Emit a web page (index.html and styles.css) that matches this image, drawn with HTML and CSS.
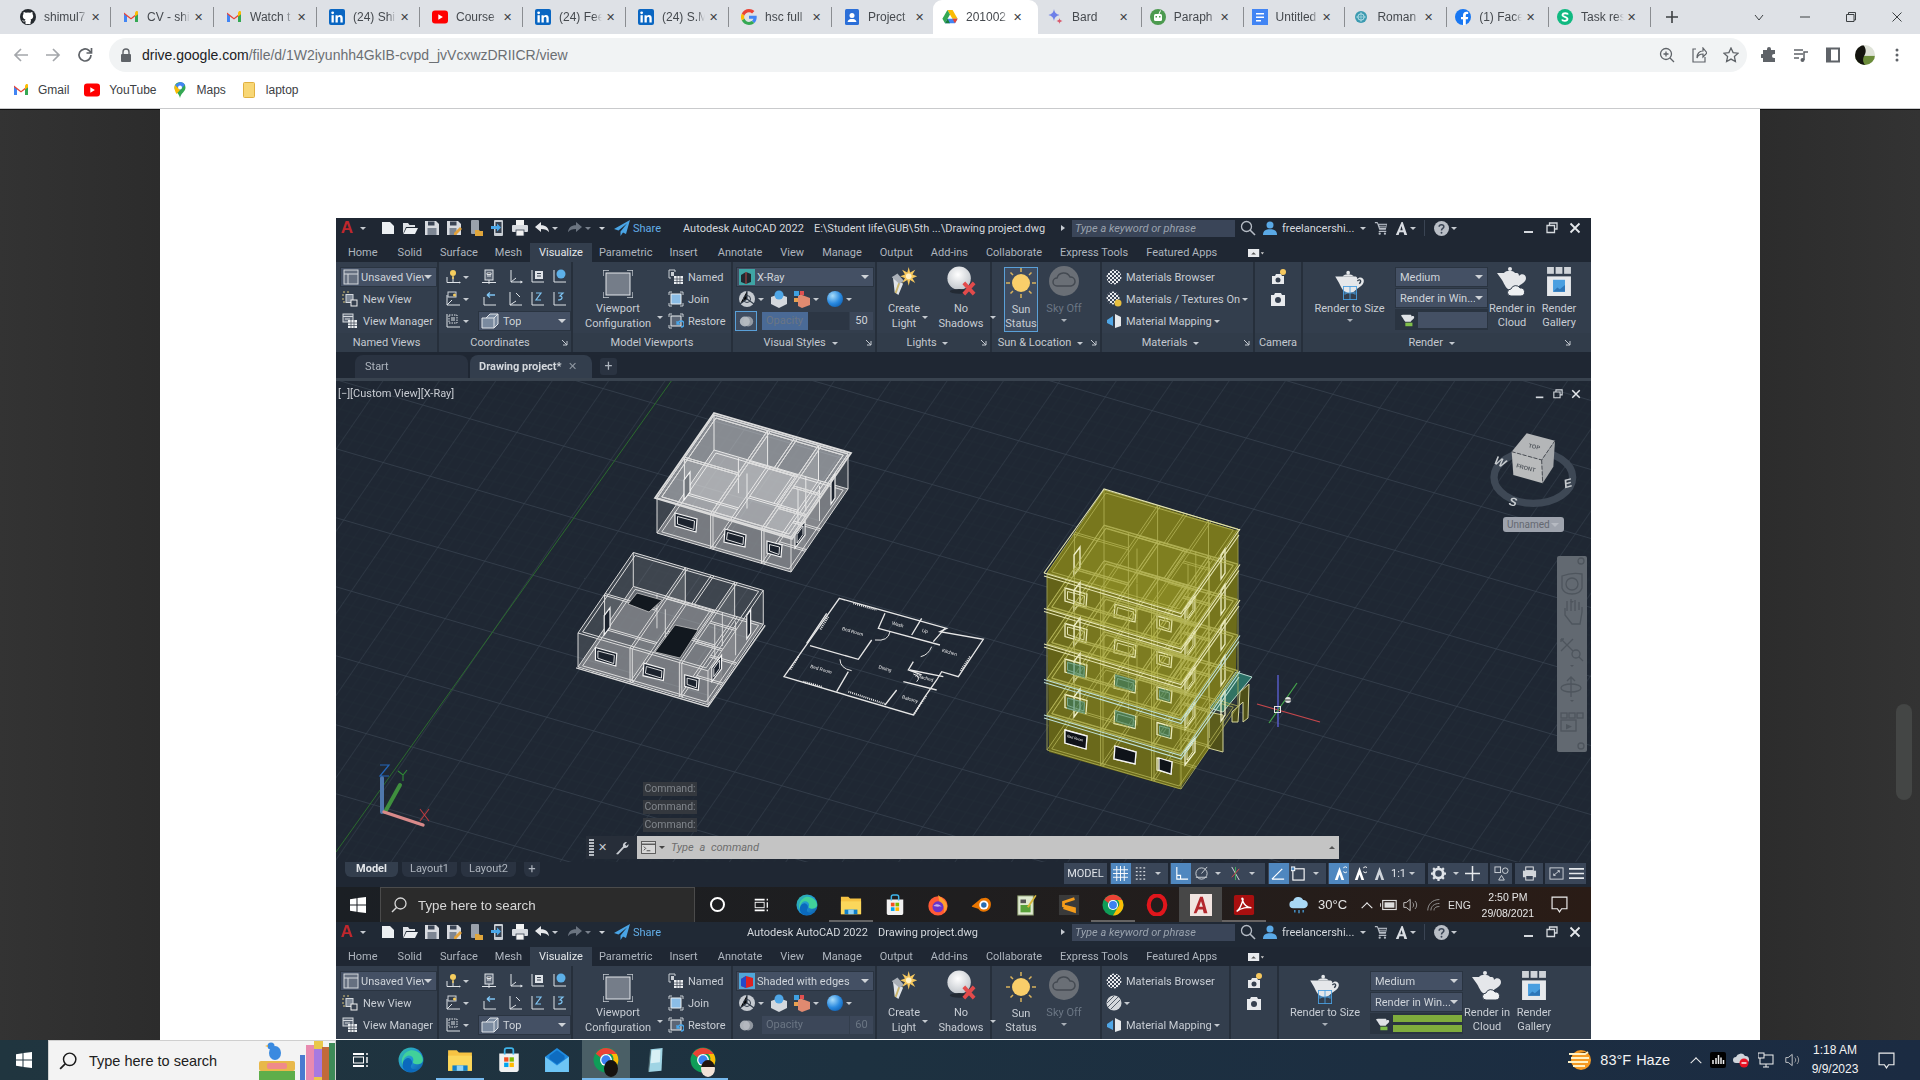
FILE: index.html
```html
<!DOCTYPE html>
<html lang="en">
<head>
<meta charset="utf-8">
<title>201002 - Google Drive</title>
<link rel="stylesheet" href="styles.css">
</head>
<body>
<svg class="defs" width="0" height="0" aria-hidden="true">
<defs>
<symbol id="f-gh" viewBox="0 0 16 16"><circle cx="8" cy="8" r="8" fill="#24292e"/><path d="M5 15v-2.500c-2 .4-2.600-1-2.800-1.500.8.300 1.500 1 2.800.6 0-.6.300-1 .5-1.200C3.500 10 2.800 8.800 2.800 7c0-.8.300-1.500.7-2-.1-.5-.1-1.200.2-2 .8 0 1.500.4 2 .8a7 7 0 0 1 4.600 0c.5-.4 1.200-.8 2-.8.300.8.300 1.500.2 2 .4.500.7 1.200.7 2 0 1.800-.7 3-2.700 3.400.3.300.5.800.5 1.500V15z" fill="#fff"/><path d="M5.500 15.500v-3l-2-1M10.500 15.500v-3" stroke="#24292e" fill="none" stroke-width=".5"/></symbol>
<symbol id="f-gm" viewBox="0 0 16 16"><path d="M1 3.500 8 9l7-5.500V13h-3V7.500L8 10.600 4 7.500V13H1z" fill="#ea4335"/><path d="M1 13h3V7.500L1 5z" fill="#4285f4"/><path d="M15 13h-3V7.500L15 5z" fill="#34a853"/><path d="M12 3.500v4l3-2.300V3c0-1-1.500-1.300-2-.8z" fill="#fbbc04"/></symbol>
<symbol id="f-li" viewBox="0 0 16 16"><rect width="16" height="16" rx="2" fill="#0a66c2"/><rect x="2.500" y="6.200" width="2.300" height="7.300" fill="#fff"/><circle cx="3.650" cy="3.800" r="1.400" fill="#fff"/><path d="M6.500 6.200h2.200v1c.5-.8 1.300-1.200 2.300-1.200 1.800 0 2.700 1.100 2.700 3.100v4.400h-2.300V9.500c0-1-.4-1.500-1.200-1.500s-1.400.6-1.400 1.600v3.900H6.500z" fill="#fff"/></symbol>
<symbol id="f-yt" viewBox="0 0 16 16"><rect y="1.500" width="16" height="13" rx="3" fill="#f00"/><path d="m6.300 5.200 4.600 2.800-4.600 2.800z" fill="#fff"/></symbol>
<symbol id="f-g" viewBox="0 0 16 16"><path d="M15.700 8.200c0-.6 0-1-.1-1.500H8v3h4.400c-.2 1-.8 1.800-1.600 2.400l2.500 2c1.500-1.400 2.400-3.400 2.400-5.900z" fill="#4285f4"/><path d="M8 16c2.200 0 4-.7 5.300-1.900l-2.500-2c-.7.500-1.600.8-2.800.8-2.100 0-3.900-1.400-4.600-3.400L.8 11.600C2.100 14.200 4.800 16 8 16z" fill="#34a853"/><path d="M3.400 9.500a4.900 4.900 0 0 1 0-3L.8 4.500a8 8 0 0 0 0 7.100z" fill="#fbbc05"/><path d="M8 3.200c1.200 0 2.300.4 3.100 1.200l2.300-2.300C12 .8 10.200 0 8 0 4.800 0 2.100 1.800.8 4.500l2.600 2C4.100 4.600 5.900 3.200 8 3.200z" fill="#ea4335"/></symbol>
<symbol id="f-ct" viewBox="0 0 16 16"><rect x="1" width="14" height="16" rx="1.500" fill="#2b6fd8"/><circle cx="8" cy="6.500" r="2.500" fill="#fff"/><path d="M3.500 13c.5-2.500 2.500-3 4.500-3s4 .5 4.500 3z" fill="#fff"/></symbol>
<symbol id="f-dr" viewBox="0 0 16 16"><path d="M5.400 1h5.200l5 8.700h-5.200z" fill="#fbbc04"/><path d="M5.400 1 .4 9.700 3 14.300l5-8.700z" fill="#34a853"/><path d="M3 14.300h10l2.600-4.600H5.600z" fill="#4285f4"/><path d="M3 14.300h5l-2.400-4.600z" fill="#188038"/><path d="M13 14.300 15.600 9.700h-5.200z" fill="#ea4335"/></symbol>
<symbol id="f-bd" viewBox="0 0 16 16"><path d="M6 0c.6 3.500 2 5 5.500 6C8 7 6.600 8.500 6 12 5.400 8.500 4 7 .5 6 4 5 5.400 3.500 6 0z" fill="#6d7fe8"/><path d="M11.500 9c.3 1.800 1 2.500 3 3-2 .5-2.700 1.200-3 3-.3-1.800-1-2.500-3-3 2-.5 2.700-1.200 3-3z" fill="#d9596c"/></symbol>
<symbol id="f-pa" viewBox="0 0 16 16"><circle cx="8" cy="8" r="8" fill="#4c9a4f"/><rect x="4" y="5" width="8" height="7" rx="1.500" fill="#fff"/><rect x="5.500" y="7" width="1.500" height="1.500" fill="#4c9a4f"/><rect x="9" y="7" width="1.500" height="1.500" fill="#4c9a4f"/><path d="M9 5 10.500 1.500" stroke="#fff"/></symbol>
<symbol id="f-dc" viewBox="0 0 16 16"><rect width="16" height="18" y="-1" rx="1.500" fill="#4285f4"/><path d="M4 4h8v1.500H4zm0 3.500h8V9H4zm0 3.500h5v1.500H4z" fill="#fff"/></symbol>
<symbol id="f-ro" viewBox="0 0 16 16"><circle cx="8" cy="8" r="6" fill="#3b9ab0"/><circle cx="8" cy="8" r="3.200" fill="none" stroke="#bfe4ec"/><path d="M3 8h10M8 3v10" stroke="#bfe4ec" stroke-width=".6"/></symbol>
<symbol id="f-fb" viewBox="0 0 16 16"><circle cx="8" cy="8" r="8" fill="#1877f2"/><path d="M10.800 16V10.300h2l.4-2.400h-2.400V6.400c0-.7.300-1.300 1.300-1.300h1.100V3c-.7-.1-1.300-.2-1.900-.2-2 0-3.300 1.200-3.300 3.400v1.700H6v2.400h2V16z" fill="#fff"/></symbol>
<symbol id="f-ts" viewBox="0 0 16 16"><circle cx="8" cy="8" r="8" fill="#10b981"/><path d="M11 5.500C10.500 4 6 3.600 5.500 5.800 5 8.200 10.800 7.500 10.500 10.200 10.200 12.500 5.500 12 5 10.500" fill="none" stroke="#fff" stroke-width="1.800"/></symbol>
<symbol id="f-mp" viewBox="0 0 16 16"><path d="M8 0a5.500 5.500 0 0 1 5.500 5.500C13.500 9.500 9 11 8 16 7 11 2.500 9.500 2.500 5.500A5.500 5.500 0 0 1 8 0z" fill="#34a853"/><path d="M3 3 8 0a5.500 5.500 0 0 1 5 2.800L8 8z" fill="#4285f4"/><path d="M2.500 5.500C2.500 4.500 2.700 3.800 3 3l5 5-3.600 4C3.500 10 2.500 8 2.500 5.500z" fill="#fbbc04"/><circle cx="8" cy="5.500" r="2" fill="#fff"/></symbol>
<symbol id="f-fd" viewBox="0 0 12 16"><rect x=".5" y=".5" width="11" height="15" rx="1" fill="#f8d775" stroke="#e0b040"/></symbol>

<symbol id="t-new" viewBox="0 0 16 16"><path d="M2 2h8l4 4v8H2z" fill="#eceff2"/></symbol>
<symbol id="t-open" viewBox="0 0 16 16"><path d="M1 3h5l1.500 2H13v2H4l-3 7z" fill="#dfe2e6"/><path d="M4.500 8H16l-3 6H1.500z" fill="#eceff2"/></symbol>
<symbol id="t-save" viewBox="0 0 16 16"><path d="M1 1h11l3 3v11H1z" fill="#d8dbe0"/><rect x="4" y="1.500" width="6.500" height="4" fill="#3a4454"/><rect x="3.500" y="8" width="9" height="7" fill="#7d8693"/></symbol>
<symbol id="t-saveas" viewBox="0 0 16 16"><path d="M1 1h11l3 3v11H1z" fill="#d8dbe0"/><rect x="4" y="1.500" width="6.500" height="4" fill="#3a4454"/><rect x="3.500" y="8" width="7" height="7" fill="#7d8693"/><path d="m8 13 6-6 2 2-6 6H8z" fill="#e2a13a"/></symbol>
<symbol id="t-ph1" viewBox="0 0 16 16"><rect x="3" y="0" width="8" height="14" rx="1" fill="#9aa1ab"/><path d="M7 10h4l1 1h3v5H7z" fill="#e0a63c"/></symbol>
<symbol id="t-ph2" viewBox="0 0 16 16"><rect x="4" y="0" width="9" height="16" rx="1" fill="#c9ced4"/><rect x="5.500" y="2" width="6" height="11" fill="#36404f"/><path d="M1 6h6V3.500L11 7.500 7 11.500V9H1z" fill="#49a6e8"/></symbol>
<symbol id="t-print" viewBox="0 0 16 16"><rect x="4" y="0" width="8" height="5" fill="#f2f2f2"/><rect x="0" y="5" width="16" height="7" rx="1" fill="#d8dbe0"/><rect x="4" y="10" width="8" height="6" fill="#f2f2f2" stroke="#36404f" stroke-width=".8"/></symbol>
<symbol id="t-undo" viewBox="0 0 16 16"><path d="M1 7 7 2v3.200c5 0 7.500 2.300 8 7-1.800-2.500-4-3.200-8-3.200V12z" fill="currentColor"/></symbol>
<symbol id="t-plane" viewBox="0 0 16 16"><path d="M16 0 0 9l4.500 1.500L13 3.500 6.500 11.500V16l2.500-3.500 3 1.500z" fill="#4aa5e6"/></symbol>
<symbol id="t-mag" viewBox="0 0 16 16"><circle cx="6.500" cy="6.500" r="5" fill="none" stroke="currentColor" stroke-width="1.300"/><path d="m10 10 5 5" stroke="currentColor" stroke-width="1.600"/></symbol>
<symbol id="t-user" viewBox="0 0 16 16"><circle cx="8" cy="4.500" r="4" fill="#5aa9e6"/><path d="M0 16c0-5 3-6.500 8-6.500S16 11 16 16z" fill="#5aa9e6"/></symbol>
<symbol id="t-cart" viewBox="0 0 16 16"><path d="M1 1h3l1 2h10l-1.500 7H6L3.500 2.500H1zM6 11h8v1.500H5z" fill="#b6bcc5"/><circle cx="6.500" cy="14.500" r="1.300" fill="#b6bcc5"/><circle cx="12.500" cy="14.500" r="1.300" fill="#b6bcc5"/><path d="M6 5h8M6.500 7h7" stroke="#1f2733"/></symbol>
<symbol id="t-a" viewBox="0 0 16 16"><path d="M8 0h1.500L15 16h-3.500l-1-3.500h-5L4.500 16H1zM6.500 10h3L8 5z" fill="#d8dce2"/></symbol>
<symbol id="t-help" viewBox="0 0 16 16"><circle cx="8" cy="8" r="8" fill="#b9bec6"/><path d="M5.500 6C5.500 3.500 10.500 3.500 10.500 6 10.500 8 8 7.800 8 10" fill="none" stroke="#3a4454" stroke-width="1.600"/><circle cx="8" cy="12.500" r="1" fill="#3a4454"/></symbol>
<symbol id="t-min" viewBox="0 0 12 12"><path d="M1 10h9" stroke="#d5d9de" stroke-width="2"/></symbol>
<symbol id="t-rest" viewBox="0 0 12 12"><path d="M3.500 3V1h7.500v6H8.500M1 3.500h7.500v7H1z" fill="none" stroke="#d5d9de" stroke-width="1.300"/></symbol>
<symbol id="t-x" viewBox="0 0 12 12"><path d="m1.500 1.500 9 9m0-9-9 9" stroke="#e5e8ec" stroke-width="1.800"/></symbol>

<symbol id="r-view" viewBox="0 0 16 16"><rect x="1" y="1" width="14" height="14" fill="#667080" stroke="#d5d9de"/><path d="M1 5h14M5 5v10" stroke="#d5d9de"/></symbol>
<symbol id="r-newv" viewBox="0 0 16 16"><path d="M1 1h2M5 1h2M1 3v2M1 7v2M1 11h2" stroke="#d9c47c"/><rect x="4" y="3.500" width="7" height="8" fill="#7e8896" stroke="#d5d9de"/><rect x="9" y="9" width="6" height="6" fill="#36404f" stroke="#f0f0f0"/></symbol>
<symbol id="r-mgr" viewBox="0 0 16 16"><rect x="1" y="1" width="10" height="8" fill="#5c6675" stroke="#d5d9de"/><path d="M1 3.500h10M3 6h5" stroke="#d5d9de"/><rect x="6" y="7" width="9" height="8" fill="#eceff2"/><path d="M6 10h9M6 12.500h9M9 7v8M12 7v8" stroke="#36404f" stroke-width=".7"/></symbol>
<symbol id="r-ax1" viewBox="0 0 16 16"><path d="M2 8v5.500h13M8 8v5.500" fill="none" stroke="#dfe3e8"/><circle cx="8" cy="4" r="3" fill="#f6cd5e"/><path d="M8 7v3" stroke="#f6cd5e" stroke-width="1.400"/><path d="m16 13.500-2-1v2z" fill="#dfe3e8"/></symbol>
<symbol id="r-ax2" viewBox="0 0 16 16"><rect x="4" y="1" width="8" height="10" fill="#5c6675" stroke="#dfe3e8"/><path d="M6 4h4v1.500H6zM6 7h4" stroke="#dfe3e8"/><path d="M1 13.500h14M8 11v4" stroke="#dfe3e8"/></symbol>
<symbol id="r-ax3" viewBox="0 0 16 16"><path d="M4 1v12l5-4" fill="none" stroke="#dfe3e8"/><path d="M4 13h11" stroke="#dfe3e8"/><path d="m16 13-2.500-1.500v3z" fill="#dfe3e8"/></symbol>
<symbol id="r-ax4" viewBox="0 0 16 16"><path d="M3 1v12h12" fill="none" stroke="#dfe3e8"/><rect x="6" y="2" width="8" height="8" fill="#dfe3e8"/><path d="M8 4.500h4M8 7h4" stroke="#36404f"/></symbol>
<symbol id="r-ax5" viewBox="0 0 16 16"><path d="M3 1v12h12" fill="none" stroke="#dfe3e8"/><circle cx="10" cy="5" r="4.500" fill="#5db0e8"/></symbol>
<symbol id="r-ax6" viewBox="0 0 16 16"><path d="M2 4v10h13M2 14l5-5" fill="none" stroke="#dfe3e8"/><rect x="3" y="1" width="8" height="5" fill="none" stroke="#cfd4da"/><circle cx="9.500" cy="4" r="1.500" fill="#f6cd5e"/></symbol>
<symbol id="r-ax7" viewBox="0 0 16 16"><path d="M3 6v8h12" fill="none" stroke="#dfe3e8"/><path d="M6 4H14M6 4l3-2.500M6 4l3 2.500" stroke="#7fc4f2" fill="none" stroke-width="1.300"/></symbol>
<symbol id="r-ax8" viewBox="0 0 16 16"><path d="M3 1v13h12M3 14l6-4" fill="none" stroke="#dfe3e8"/><path d="m9 2 4 4" stroke="#dfe3e8"/></symbol>
<symbol id="r-ax9" viewBox="0 0 16 16"><path d="M3 1v13h12" fill="none" stroke="#dfe3e8"/><path d="M7 2h5L7 9h5" fill="none" stroke="#7fc4f2" stroke-width="1.200"/></symbol>
<symbol id="r-ax10" viewBox="0 0 16 16"><path d="M3 1v13h12" fill="none" stroke="#dfe3e8"/><path d="M7 2h5l-3 3c3 0 3 4-2 4" fill="none" stroke="#7fc4f2" stroke-width="1.200"/></symbol>
<symbol id="r-ax11" viewBox="0 0 16 16"><path d="M2 14h13M2 14V1" fill="none" stroke="#dfe3e8"/><rect x="4" y="2" width="8" height="8" fill="none" stroke="#dfe3e8" stroke-dasharray="1.500 1"/><path d="M6 5h4M6 7h4" stroke="#dfe3e8"/></symbol>
<symbol id="r-top" viewBox="0 0 18 16"><path d="M5 5 9 1h8v10l-4 4H1V5zM5 5h8v10M13 5l4-4" fill="#7a8a9f" stroke="#dfe3e8"/></symbol>
<symbol id="r-vp" viewBox="0 0 30 28"><path d="M0 6V0h6M24 0h6v6M30 22v6h-6M6 28H0v-6" fill="none" stroke="#c9ced4" stroke-width="1.300"/><rect x="3" y="3" width="24" height="22" fill="#757d89" stroke="#e3e6ea"/></symbol>
<symbol id="r-named" viewBox="0 0 16 16"><path d="M1 3V1h6v2M1 3v6h2" fill="none" stroke="#c9ced4"/><rect x="3" y="3" width="3" height="4" fill="#c9ced4"/><rect x="6" y="7" width="9" height="8" fill="#eceff2"/><path d="M6 10h9M6 12.500h9M9 7v8M12 7v8" stroke="#36404f" stroke-width=".7"/></symbol>
<symbol id="r-join" viewBox="0 0 16 16"><path d="M1 4V1h3M12 1h3v3M15 12v3h-3M4 15H1v-3" fill="none" stroke="#c9ced4"/><rect x="3" y="3" width="10" height="10" fill="#8bbde6" stroke="#eceff2"/></symbol>
<symbol id="r-rest" viewBox="0 0 16 16"><path d="M1 4V1h3M12 1h3v3M4 15H1v-3" fill="none" stroke="#c9ced4"/><rect x="3" y="3" width="10" height="10" fill="#5c6675" stroke="#eceff2"/><path d="M10 11a3 3 0 1 1 3 3M9 8v3h3" fill="none" stroke="#49a6e8" stroke-width="1.300"/></symbol>
<symbol id="r-xray" viewBox="0 0 16 16"><rect width="16" height="16" fill="#3fa5a5"/><path d="M2 6 7 3l5 2v8l-5 2-5-2z" fill="#20282f"/><path d="M7 3v12" stroke="#b44"/></symbol>
<symbol id="r-shaded" viewBox="0 0 16 16"><rect width="16" height="16" fill="#4fa6d8"/><path d="M2 6 7 3l7 2v8l-7 2-5-2z" fill="#d22"/><path d="M7 3v12L2 13V6z" fill="#2348c9"/></symbol>
<symbol id="r-vs1" viewBox="0 0 18 18"><circle cx="9" cy="9" r="8" fill="#c5cad0"/><path d="M9 1v8l-7 5M9 9l7 5" stroke="#333e4c" stroke-width="1.200"/><circle cx="9" cy="9" r="3.500" fill="none" stroke="#333e4c"/></symbol>
<symbol id="r-vs2" viewBox="0 0 18 18"><path d="m9 4 8 3v7l-8 4-8-4V7z" fill="#d4d8dd"/><circle cx="9" cy="5" r="4.500" fill="#4fa6e6"/></symbol>
<symbol id="r-vs3" viewBox="0 0 18 18"><path d="m9 5 8 3v7l-8 3-4-2V5z" fill="#e08a70"/><rect x="1" y="1" width="5" height="5" fill="#3fa0e0"/><rect x="7" y="1" width="4" height="4" fill="#e05050"/><rect x="1" y="8" width="4" height="4" fill="#e8a050"/></symbol>
<symbol id="r-vs4" viewBox="0 0 18 18"><defs><radialGradient id="gBall" cx=".35" cy=".3" r=".8"><stop offset="0" stop-color="#a8dcfa"/><stop offset=".6" stop-color="#2a8ae0"/><stop offset="1" stop-color="#0f5fb0"/></radialGradient></defs><circle cx="9" cy="9" r="8" fill="url(#gBall)"/></symbol>
<symbol id="r-xr2" viewBox="0 0 18 18"><circle cx="7" cy="9" r="6" fill="#e0e2e5" fill-opacity=".7"/><circle cx="11" cy="9" r="6" fill="#b8bcc2" fill-opacity=".7"/></symbol>
<symbol id="r-light" viewBox="0 0 30 32"><path d="M3 11 14 19 9 31 5 28 4 18z" fill="#dfe3e8"/><path d="m6 29 4-11" stroke="#c9b56c" stroke-width="2"/><path d="M2 12 8 8 15 16 10 19z" fill="#aab0b8"/><path d="M20 1 21.500 7 27 4 24 9 29 11 24 13 27 18 21.500 15 20 21 18.500 15 13 18 16 13 11 11 16 9 13 4 18.500 7z" fill="#f6c85e"/><circle cx="20" cy="11" r="3" fill="#fff2c8"/></symbol>
<symbol id="r-shadow" viewBox="0 0 32 32"><defs><radialGradient id="gShad" cx=".45" cy=".35" r=".7"><stop offset="0" stop-color="#fff"/><stop offset="1" stop-color="#bdc2c8"/></radialGradient></defs><circle cx="14" cy="13" r="12.500" fill="url(#gShad)"/><ellipse cx="14" cy="27" rx="10" ry="2.500" fill="#232a34"/><path d="m19 18 11 12m0-12L19 30" stroke="#e34b4b" stroke-width="4"/></symbol>
<symbol id="r-sun" viewBox="0 0 30 30"><circle cx="15" cy="15" r="9" fill="#f9ce6a"/><path d="M15 0v4M15 26v4M0 15h4M26 15h4M4.500 4.500 7 7M23 23l2.500 2.500M25.500 4.500 23 7M7 23l-2.500 2.500" stroke="#d9b25c" stroke-width="1.500"/></symbol>
<symbol id="r-sky" viewBox="0 0 30 30"><circle cx="15" cy="15" r="15" fill="#6a6f76"/><path d="M8 20a4 4 0 0 1 0-8 7 7 0 0 1 13-1 4.500 4.500 0 0 1 1 9z" fill="none" stroke="#444a52" stroke-width="1.500"/></symbol>
<symbol id="r-chk" viewBox="0 0 16 16"><defs><pattern id="pChk" width="4" height="4" patternUnits="userSpaceOnUse"><rect width="4" height="4" fill="#e8eaed"/><rect width="2" height="2" fill="#3a4454"/><rect x="2" y="2" width="2" height="2" fill="#3a4454"/></pattern></defs><circle cx="8" cy="8" r="7.500" fill="url(#pChk)"/></symbol>
<symbol id="r-chk2" viewBox="0 0 16 16"><circle cx="7" cy="7" r="6.500" fill="url(#pChk)"/><circle cx="12" cy="12" r="3.500" fill="#e8c040"/></symbol>
<symbol id="r-chk3" viewBox="0 0 16 16"><circle cx="8" cy="8" r="7.500" fill="#d5d8dc"/><path d="M2 12 12 2M5 14 14 5M1 8l7-7" stroke="#555e6a"/></symbol>
<symbol id="r-map" viewBox="0 0 16 16"><path d="M9 1 15 4v9L9 15z" fill="#e6e9ec"/><path d="M7 3 1 7v3l6 3z" fill="#4fa6e6"/></symbol>
<symbol id="r-cam1" viewBox="0 0 18 18"><path d="M3 8h3l1-2h5l1 2h2v8H3z" fill="#e8eaed"/><circle cx="9" cy="12" r="2.500" fill="#36404f"/><circle cx="14" cy="4" r="3" fill="#f6c85e"/></symbol>
<symbol id="r-cam2" viewBox="0 0 18 18"><path d="M2 5h3l1-2h6l1 2h3v11H2z" fill="#e8eaed"/><circle cx="9" cy="10" r="3" fill="#36404f"/></symbol>
<symbol id="r-pot" viewBox="0 0 32 26"><path d="M6 8h16c1 0 2 1 2 3 2-3 7-2 7 2 0 5-6 7-9 10-2 2-4 3-7 3-6 0-8-5-11-11L0 8z" fill="#e5e7ea"/><circle cx="14" cy="4" r="2" fill="#e5e7ea"/><path d="M8 8c2-3 10-3 12 0z" fill="#e5e7ea"/><path d="M24 13c3-3 5 0 2 3" stroke="#333e4c" fill="none" stroke-width="1.500"/></symbol>
<symbol id="r-potc" viewBox="0 0 30 30"><path d="M5 7h15c1 0 2 1 2 3 2-3 7-2 7 2 0 5-6 6-8 9-2 2-4 3-6 3-6 0-7-5-10-10L0 7z" fill="#e5e7ea"/><circle cx="13" cy="3" r="2" fill="#e5e7ea"/><path d="M7 7c2-3 9-3 11 0z" fill="#e5e7ea"/><path d="M14 30a3.500 3.500 0 0 1 0-7 5 5 0 0 1 9-1 4 4 0 0 1 1 8z" fill="#eef0f2" stroke="#333e4d"/></symbol>
<symbol id="r-size" viewBox="0 0 16 16"><rect x=".5" y=".5" width="15" height="15" fill="none" stroke="#4a9fe0"/><path d="M8 0v16M0 8h16M4 8l-2-2m2 2-2 2M12 8l2-2m-2 2 2 2" stroke="#4a9fe0"/></symbol>
<symbol id="r-gal" viewBox="0 0 28 34"><rect width="8" height="8" fill="#cfd3d8"/><rect x="10" width="8" height="8" fill="#cfd3d8"/><rect x="20" width="8" height="8" fill="#cfd3d8"/><rect y="11" width="28" height="23" fill="#e7e9ec"/><rect x="7" y="15" width="14" height="14" fill="#4a9fe0"/><path d="m7 29 5-5 3 2 6-5v8z" fill="#2e76b8"/></symbol>
<symbol id="r-prog" viewBox="0 0 18 16"><path d="M3 2h9c1 0 1 2 1 2 2-1 3 0 3 1 0 2-3 3-4 5H6C4 8 3 5 1 3z" fill="#dfe2e6"/><rect x="6" y="11" width="8" height="4" fill="#7fbf4a"/></symbol>
<symbol id="r-launch" viewBox="0 0 8 8"><path d="M1 1l5 5M6 2v4H2" stroke="#c4c9d0" fill="none"/></symbol>

<symbol id="s-grid" viewBox="0 0 16 16"><path d="M4 0v16M8 0v16M12 0v16M0 4h16M0 8h16M0 12h16" stroke="#fff"/></symbol>
<symbol id="s-snap" viewBox="0 0 16 16"><path d="M3 2h2M7 2h2M11 2h2M3 6h2M7 6h2M11 6h2M3 10h2M7 10h2M11 10h2M3 14h2M7 14h2M11 14h2" stroke="#d4d8dd" stroke-width="1.500"/></symbol>
<symbol id="s-ortho" viewBox="0 0 16 16"><path d="M3 1v13h12M3 10h4v4" stroke="#fff" fill="none" stroke-width="1.200"/></symbol>
<symbol id="s-polar" viewBox="0 0 16 16"><circle cx="8" cy="8" r="6" fill="none" stroke="#cfd4da"/><path d="M8 8 14 1M2 12h12" stroke="#cfd4da"/></symbol>
<symbol id="s-iso" viewBox="0 0 16 16"><path d="M4 1 12 15" stroke="#d5d9de"/><path d="M8 1 8 15" stroke="#3fae5e"/><path d="M12 3 4 12" stroke="#d94a4a"/></symbol>
<symbol id="s-osnap" viewBox="0 0 16 16"><path d="M1 14 12 3M1 14h13" stroke="#fff" stroke-width="1.300" fill="none"/></symbol>
<symbol id="s-trans" viewBox="0 0 16 16"><rect x="2" y="3" width="12" height="12" fill="none" stroke="#fff" stroke-width="1.200"/><rect x="0" y="1" width="4" height="4" fill="#4f87bf" stroke="#fff"/></symbol>
<symbol id="s-anno" viewBox="0 0 16 16"><path d="M8 1 13 15H10L8 9 6 15H3z" fill="#fff"/><path d="M12 6a3 3 0 1 0 0-4" stroke="#fff" fill="none"/></symbol>
<symbol id="s-anno2" viewBox="0 0 16 16"><path d="M8 1 13 15H10L8 9 6 15H3z" fill="#cfd4da"/></symbol>
<symbol id="s-gear" viewBox="0 0 16 16"><circle cx="8" cy="8" r="5" fill="none" stroke="#dfe3e8" stroke-width="3"/><path d="M8 0v3M8 13v3M0 8h3M13 8h3M2.300 2.300l2 2M11.700 11.700l2 2M13.700 2.300l-2 2M4.300 11.700l-2 2" stroke="#dfe3e8" stroke-width="2.400"/></symbol>
<symbol id="s-plus" viewBox="0 0 16 16"><path d="M8 0v16M0 8h16" stroke="#e6e9ec" stroke-width="1.600"/></symbol>
<symbol id="s-shapes" viewBox="0 0 16 16"><rect x="1" y="1" width="6" height="6" fill="none" stroke="#cfd4da"/><circle cx="12" cy="5" r="3" fill="none" stroke="#cfd4da"/><path d="M5 15l3-5 3 5z" fill="none" stroke="#cfd4da"/></symbol>
<symbol id="s-print" viewBox="0 0 16 16"><rect x="4" y="1" width="8" height="4" fill="none" stroke="#e6e9ec"/><rect x="1" y="5" width="14" height="7" fill="#d2d6db"/><rect x="4" y="10" width="8" height="5" fill="#3a4658" stroke="#e6e9ec"/></symbol>
<symbol id="s-full" viewBox="0 0 16 16"><rect x="1" y="2" width="14" height="12" fill="none" stroke="#cfd4da"/><path d="m5 10 6-5M9 5h2v2M5 8v2h2" stroke="#cfd4da" fill="none"/></symbol>
<symbol id="s-menu" viewBox="0 0 16 16"><path d="M0 3h16M0 8h16M0 13h16" stroke="#e6e9ec" stroke-width="1.800"/></symbol>
<symbol id="c-term" viewBox="0 0 16 14"><rect x=".5" y=".5" width="15" height="13" fill="#d8d8d8" stroke="#555"/><path d="M.5 3.500h15" stroke="#555" stroke-width="1.500"/><path d="m3 6 2 2-2 2M6 10.500h4" stroke="#444" fill="none"/></symbol>
<symbol id="c-wrench" viewBox="0 0 14 14"><path d="M1 13 8 5.500C7.500 3 9 1 12 1L10 3.500 11.500 5 13.500 3c.5 3-2 4.500-4.500 4L3 13.500z" fill="#c8ccd2"/></symbol>

<symbol id="w-logo" viewBox="0 0 16 16"><path d="M0 2.200 6.500 1.300V7.500H0zM7.500 1.100 16 0V7.500H7.500zM0 8.500H6.500V14.700L0 13.800zM7.500 8.500H16V16L7.500 14.900z" fill="#fff"/></symbol>
<symbol id="w-search" viewBox="0 0 16 16"><circle cx="9.500" cy="6.500" r="5.500" fill="none" stroke="currentColor" stroke-width="1.300"/><path d="M5.500 10.500 1 15" stroke="currentColor" stroke-width="1.500"/></symbol>
<symbol id="w-task" viewBox="0 0 20 20"><path d="M3 3h11v2H3zM3 15h11v2H3z" fill="#fff"/><rect x="3.500" y="7" width="10" height="6" fill="none" stroke="#fff"/><path d="M17 3v2M17 7v6M17 15v2" stroke="#fff" stroke-width="1.400"/></symbol>
<symbol id="w-edge" viewBox="0 0 24 24"><defs><linearGradient id="gEdge" x1="0" y1="0" x2="1" y2="1"><stop offset="0" stop-color="#35c1a0"/><stop offset=".5" stop-color="#1f93d8"/><stop offset="1" stop-color="#0c59a4"/></linearGradient></defs><circle cx="12" cy="12" r="11.500" fill="url(#gEdge)"/><path d="M6 20c-6-8 0-17 7-17 5 0 10 4 10 9 0 3-3 4-5 4-3 0-5-1-4-3 1-3-2-6-5-5-4 1-6 7-3 12z" fill="#41d19a"/><path d="M7 11c4-3 8 3 5 6-1 3 2 4 6 3-4 4-9 4-12 1-3-3-2-8 1-10z" fill="#0b69bd"/></symbol>
<symbol id="w-folder" viewBox="0 0 24 24"><path d="M1 3h8l2 2h12v17H1z" fill="#f6c343"/><path d="M1 8h22v14H1z" fill="#fbd75b"/><rect x="5" y="17" width="14" height="5" fill="#0f7fc9"/><rect x="9" y="17" width="6" height="5" fill="#8fd2f5"/></symbol>
<symbol id="w-store" viewBox="0 0 24 24"><path d="M3 6h18v15c0 1-1 2-2 2H5c-1 0-2-1-2-2z" fill="#f1f1f1"/><path d="M8 7V3c0-1 1-2 2-2h4c1 0 2 1 2 2v4" stroke="#3fb4ea" fill="none" stroke-width="1.600"/><rect x="7.500" y="9.500" width="4" height="4" fill="#f25022"/><rect x="12.500" y="9.500" width="4" height="4" fill="#7fba00"/><rect x="7.500" y="14.500" width="4" height="4" fill="#00a4ef"/><rect x="12.500" y="14.500" width="4" height="4" fill="#ffb900"/></symbol>
<symbol id="w-mail" viewBox="0 0 24 24"><path d="M12 1 23 9v14H1V9z" fill="#1f8be0"/><path d="M1 9 12 17 23 9v14H1z" fill="#6ec5f5"/><path d="M5 11V8l7-5 7 5v3l-7 5z" fill="#0e6cc0"/></symbol>
<symbol id="w-chrome" viewBox="0 0 24 24"><circle cx="12" cy="12" r="11.500" fill="#0f9d58"/><path d="M2.500 6.200A11.500 11.500 0 0 1 22 6.500H12a5.500 5.500 0 0 0-5 3.200z" fill="#ea4335"/><path d="M22 6.500A11.500 11.500 0 0 1 12 23.500L17 15a5.500 5.500 0 0 0-.2-8.500z" fill="#fbbc05"/><circle cx="12" cy="12" r="5.500" fill="#fff"/><circle cx="12" cy="12" r="4.300" fill="#3b82f0"/></symbol>
<symbol id="w-note" viewBox="0 0 24 24"><path d="M8 2 19 1 18 22 6 23z" fill="#9fd4e4"/><path d="M9 3 17 2.500 16.500 14 8 15z" fill="#d8f0f5"/><path d="M6 23 8 2" stroke="#506a70"/></symbol>
<symbol id="w-fire" viewBox="0 0 24 24"><circle cx="12" cy="13" r="10.500" fill="#ff5a36"/><path d="M12 1c3 3 9 5 10 12 0 3-2 6-4 8 2-5 0-9-4-10z" fill="#ff9f2e"/><circle cx="12" cy="14" r="6" fill="#6a34c9"/><path d="M7 13c3-3 7-2 9 1-1-1-3-1-4 0z" fill="#fff" fill-opacity=".6"/></symbol>
<symbol id="w-blend" viewBox="0 0 24 24"><path d="M1 13 11 5l5-1c5 1 7 6 5 11-3 5-10 6-13 1L1 14z" fill="#ea7600"/><circle cx="14" cy="12" r="5" fill="#fff"/><circle cx="14" cy="12" r="3" fill="#2a6db0"/></symbol>
<symbol id="w-notes" viewBox="0 0 24 24"><rect x="3" y="2" width="17" height="21" fill="#dfead0" stroke="#7a8a60"/><rect x="6" y="12" width="11" height="8" fill="#58a23a"/><path d="M6 6h6v4H6z" fill="#555"/><path d="m13 14 9-13 1.500 1L15 15z" fill="#d8b83a"/></symbol>
<symbol id="w-subl" viewBox="0 0 24 24"><rect x="1" y="1" width="22" height="22" fill="#3a3a3a"/><path d="M18 5 6 9v4l12 3v3L6 15" fill="none" stroke="#f59c1a" stroke-width="3"/></symbol>
<symbol id="w-opera" viewBox="0 0 24 24"><ellipse cx="12" cy="12" rx="9" ry="10.500" fill="none" stroke="#e0161c" stroke-width="4.500"/></symbol>
<symbol id="w-acad" viewBox="0 0 24 24"><rect width="24" height="24" fill="#f1e4e0"/><path d="M11 3h3l5 18h-4l-1-4H9l-2 4H4zm-1 11h4l-2-6z" fill="#b3272d"/></symbol>
<symbol id="w-adobe" viewBox="0 0 24 24"><rect x="1" y="1" width="22" height="22" rx="2" fill="#a80f0f"/><path d="M4 19c3-2 5-6 7-13 0-2-2-2-1 0 2 6 5 9 10 9-4-1-11 0-16 4z" fill="none" stroke="#fff" stroke-width="1.500"/></symbol>
<symbol id="w-cloud" viewBox="0 0 24 24"><path d="M5 16a4.500 4.500 0 0 1 0-9 6.500 6.500 0 0 1 12-1 5 5 0 0 1 1 10z" fill="#a9d8f5"/><path d="M7 18v3M12 18v4M17 18v3" stroke="#4ba6e6" stroke-width="1.500"/></symbol>
<symbol id="w-batt" viewBox="0 0 20 14"><rect x="3" y="2" width="15" height="10" fill="none" stroke="#ddd" stroke-width="1.300"/><rect x="5" y="4" width="11" height="6" fill="#ddd"/><path d="M0 5v4" stroke="#ddd" stroke-width="2"/></symbol>
<symbol id="w-vol" viewBox="0 0 20 16"><path d="M1 5h3l5-4v14l-5-4H1z" fill="none" stroke="#e3e3e3"/><path d="M12 5a4 4 0 0 1 0 6M15 3a7 7 0 0 1 0 10" fill="none" stroke="#b5b5b5"/></symbol>
<symbol id="w-wifi" viewBox="0 0 18 16"><path d="M1 15c0-8 6-14 15-14M5 15c0-5 4-9 11-9M9 15c0-3 2-5 7-5" fill="none" stroke="#9a9a9a" stroke-width="1.200"/></symbol>
<symbol id="w-note2" viewBox="0 0 16 16"><path d="M1 1h14v11H10l-2 3-2-3H1z" fill="none" stroke="#eee" stroke-width="1.100"/></symbol>
<symbol id="w-haze" viewBox="0 0 24 24"><circle cx="13" cy="12" r="10" fill="#f59a23"/><path d="M1 6h16l3-2M3 10h18M0 14h20M5 18h12" stroke="#fff2c5" stroke-width="1.800"/></symbol>
<symbol id="w-bars" viewBox="0 0 16 16"><rect width="16" height="16" rx="2" fill="#000"/><path d="M3 12V8M6 12V6M8.500 12V3M11 12V5.500M13.500 12V8" stroke="#eee" stroke-width="1.500"/></symbol>
<symbol id="w-off" viewBox="0 0 16 16"><path d="M3 11a3 3 0 0 1 0-6 5 5 0 0 1 9-1 3.500 3.500 0 0 1 1 7z" fill="#cfd4da"/><circle cx="11" cy="11" r="4.500" fill="#e81123"/><path d="M8.500 11h5" stroke="#fff" stroke-width="1.400"/></symbol>
<symbol id="w-net" viewBox="0 0 16 16"><rect x="2" y="3" width="13" height="9" fill="none" stroke="#f2f2f2"/><rect x="0" y="1" width="6" height="5" fill="#1b2b42" stroke="#f2f2f2"/><path d="M8 12v3M5 15h6" stroke="#f2f2f2"/></symbol>
</defs>
</svg>

<header class="chrome">
  <div class="tabstrip">
    <div class="tab"><svg class="fav"><use href="#f-gh"/></svg><span class="tab-t">shimul7</span><span class="tab-x">✕</span></div>
    <div class="tab"><svg class="fav"><use href="#f-gm"/></svg><span class="tab-t">CV - shi</span><span class="tab-x">✕</span></div>
    <div class="tab"><svg class="fav"><use href="#f-gm"/></svg><span class="tab-t">Watch t</span><span class="tab-x">✕</span></div>
    <div class="tab"><svg class="fav"><use href="#f-li"/></svg><span class="tab-t">(24) Shi</span><span class="tab-x">✕</span></div>
    <div class="tab"><svg class="fav"><use href="#f-yt"/></svg><span class="tab-t">Course</span><span class="tab-x">✕</span></div>
    <div class="tab"><svg class="fav"><use href="#f-li"/></svg><span class="tab-t">(24) Fee</span><span class="tab-x">✕</span></div>
    <div class="tab"><svg class="fav"><use href="#f-li"/></svg><span class="tab-t">(24) S.M</span><span class="tab-x">✕</span></div>
    <div class="tab"><svg class="fav"><use href="#f-g"/></svg><span class="tab-t">hsc full</span><span class="tab-x">✕</span></div>
    <div class="tab tab-plain"><svg class="fav"><use href="#f-ct"/></svg><span class="tab-t">Project</span><span class="tab-x">✕</span></div>
    <div class="tab-active"><svg class="fav"><use href="#f-dr"/></svg><span class="tab-t">201002</span><span class="tab-x">✕</span></div>
    <div class="tab tab-r"><svg class="fav"><use href="#f-bd"/></svg><span class="tab-t">Bard</span><span class="tab-x">✕</span></div>
    <div class="tab tab-r"><svg class="fav"><use href="#f-pa"/></svg><span class="tab-t">Paraph</span><span class="tab-x">✕</span></div>
    <div class="tab tab-r"><svg class="fav"><use href="#f-dc"/></svg><span class="tab-t">Untitled</span><span class="tab-x">✕</span></div>
    <div class="tab tab-r"><svg class="fav"><use href="#f-ro"/></svg><span class="tab-t">Roman</span><span class="tab-x">✕</span></div>
    <div class="tab tab-r"><svg class="fav"><use href="#f-fb"/></svg><span class="tab-t">(1) Face</span><span class="tab-x">✕</span></div>
    <div class="tab tab-r"><svg class="fav"><use href="#f-ts"/></svg><span class="tab-t">Task res</span><span class="tab-x">✕</span></div>
    <svg class="newtab" viewBox="0 0 12 12"><path d="M6 0v12M0 6h12" stroke="#3c4043" stroke-width="1.600"/></svg>
    <div class="winbtns">
      <span class="winbtn"><svg viewBox="0 0 10 10" class="wb"><path d="m1 3 4 5 4-5" fill="none" stroke="#3c4043"/></svg></span>
      <span class="winbtn"><svg viewBox="0 0 10 10" class="wb"><path d="M0 5h10" stroke="#3c4043"/></svg></span>
      <span class="winbtn"><svg viewBox="0 0 10 10" class="wb"><path d="M2.500 2V.5h7V8H8M.5 2.500H8v7H.5z" fill="none" stroke="#3c4043"/></svg></span>
      <span class="winbtn"><svg viewBox="0 0 10 10" class="wb"><path d="m.5.5 9 9m0-9-9 9" stroke="#3c4043"/></svg></span>
    </div>
  </div>
  <div class="toolbar">
    <span class="tbtn"><svg class="ti" viewBox="0 0 16 16"><path d="M15 8H2M8 2 2 8l6 6" fill="none" stroke="#a4a7ab" stroke-width="1.700"/></svg></span>
    <span class="tbtn"><svg class="ti" viewBox="0 0 16 16"><path d="M1 8h13M8 2l6 6-6 6" fill="none" stroke="#a4a7ab" stroke-width="1.700"/></svg></span>
    <span class="tbtn"><svg class="ti" viewBox="0 0 16 16"><path d="M14 8a6 6 0 1 1-2-4.500L14.500 6M14.500 1v5h-5" fill="none" stroke="#5f6368" stroke-width="1.700"/></svg></span>
    <div class="omni">
      <svg class="lock" viewBox="0 0 12 14"><path d="M3 6V4a3 3 0 0 1 6 0v2" fill="none" stroke="#5f6368" stroke-width="1.400"/><rect x="1" y="6" width="10" height="8" rx="1" fill="#5f6368"/></svg>
      <span class="url"><b>drive.google.com</b>/file/d/1W2iyunhh4GkIB-cvpd_jvVcxwzDRIICR/view</span>
      <span class="tbtn"><svg class="ti" viewBox="0 0 16 16"><circle cx="7" cy="7" r="5.500" fill="none" stroke="#5f6368" stroke-width="1.300"/><path d="m11 11 4 4M4.500 7h5M7 4.500v5" stroke="#5f6368" stroke-width="1.300"/></svg></span>
      <span class="tbtn"><svg class="ti" viewBox="0 0 16 16"><path d="M5 2H2v13h12v-5M6 11c0-5 3-7 6-7V1l4 5-4 4V7C9 7 7 8 6 11z" fill="none" stroke="#5f6368" stroke-width="1.200"/></svg></span>
      <span class="tbtn"><svg class="ti" viewBox="0 0 16 16"><path d="m8 1 2.100 4.600 5 .6-3.700 3.400 1 5L8 12.100l-4.400 2.500 1-5L.9 6.200l5-.6z" fill="none" stroke="#5f6368" stroke-width="1.300"/></svg></span>
    </div>
    <div class="tools-r">
      <span class="tbtn"><svg class="ti" viewBox="0 0 16 16"><path d="M6 2a2 2 0 0 1 4 0v1h4v4h-1a2 2 0 0 0 0 4h1v4H2v-4H1a2 2 0 0 1 0-4h1V3h4z" fill="#5f6368"/></svg></span>
      <span class="tbtn"><svg class="ti" viewBox="0 0 16 16"><path d="M1 3h9M1 7h9M1 11h5" stroke="#5f6368" stroke-width="1.500"/><path d="M11 13V5h4" fill="none" stroke="#5f6368" stroke-width="1.500"/><circle cx="9.500" cy="13" r="2" fill="#5f6368"/></svg></span>
      <span class="tbtn"><svg class="ti" viewBox="0 0 16 16"><rect x="2" y="1.500" width="12" height="13" fill="none" stroke="#5f6368" stroke-width="2"/><rect x="2" y="2" width="4" height="12" fill="#5f6368"/></svg></span>
      <span class="tbtn"><svg class="avatar" viewBox="0 0 22 22"><defs><clipPath id="cAv"><ellipse cx="11" cy="11" rx="11" ry="11"/></clipPath></defs><g clip-path="url(#cAv)"><rect width="22" height="22" fill="#dfe3d8"/><rect y="12" width="22" height="10" fill="#6b8c3a"/><path d="M0 0h9c3 3 4 8 1 12-2 4-1 7 1 10H0z" fill="#14140f"/></g></svg></span>
      <span class="tbtn"><svg class="ti" viewBox="0 0 16 16"><circle cx="8" cy="3" r="1.500" fill="#5f6368"/><circle cx="8" cy="8" r="1.500" fill="#5f6368"/><circle cx="8" cy="13" r="1.500" fill="#5f6368"/></svg></span>
    </div>
  </div>
  <div class="bookmarks">
    <span class="bm"><svg class="fav"><use href="#f-gm"/></svg>Gmail</span>
    <span class="bm"><svg class="fav"><use href="#f-yt"/></svg>YouTube</span>
    <span class="bm"><svg class="fav"><use href="#f-mp"/></svg>Maps</span>
    <span class="bm"><svg class="fav"><use href="#f-fd"/></svg>laptop</span>
  </div>
</header>

<main class="viewer">
  <div class="page">
    <div class="shot">
      <section class="acad">
        <div class="titlebar">
          <div class="tb-left">
            <span class="acad-a">A</span><i class="cr1"></i>
            <svg class="qi qi-first"><use href="#t-new"/></svg><svg class="qi"><use href="#t-open"/></svg><svg class="qi"><use href="#t-save"/></svg><svg class="qi"><use href="#t-saveas"/></svg><svg class="qi"><use href="#t-ph1"/></svg><svg class="qi"><use href="#t-ph2"/></svg><svg class="qi"><use href="#t-print"/></svg><svg class="qi qi-und"><use href="#t-undo"/></svg><i class="cr1"></i><svg class="qi qi-red"><use href="#t-undo"/></svg><i class="cr1 dim"></i><i class="cr1 bar"></i>
            <svg class="qi qi-pl"><use href="#t-plane"/></svg><span class="share">Share</span>
          </div>
          <div class="tb-title"><span class="t-app">Autodesk AutoCAD 2022</span><span>E:\Student life\GUB\5th ...\Drawing project.dwg</span></div>
          <div class="tb-right">
            <i class="tri-r"></i><span class="kw">Type a keyword or phrase</span>
            <svg class="qi mag"><use href="#t-mag"/></svg><svg class="qi usr"><use href="#t-user"/></svg><span class="uname">freelancershi...</span><i class="cr1 c-u"></i>
            <svg class="qi cart"><use href="#t-cart"/></svg><svg class="qi a2"><use href="#t-a"/></svg><i class="cr1"></i><span class="tsep"></span><svg class="qi help"><use href="#t-help"/></svg><i class="cr1"></i>
            <svg class="ctl c-min"><use href="#t-min"/></svg><svg class="ctl"><use href="#t-rest"/></svg><svg class="ctl"><use href="#t-x"/></svg>
          </div>
        </div>
        <nav class="rtabs">
          <span>Home</span><span>Solid</span><span>Surface</span><span>Mesh</span><span class="on">Visualize</span><span>Parametric</span><span>Insert</span><span>Annotate</span><span>View</span><span>Manage</span><span>Output</span><span>Add-ins</span><span>Collaborate</span><span>Express Tools</span><span>Featured Apps</span><svg class="rt-mini" viewBox="0 0 20 10"><rect width="14" height="10" fill="#e8eaed"/><path d="m4 7 3-3 3 3z" fill="#555"/><path d="m16 4 4 0-2 3z" fill="#ccc"/></svg>
        </nav>
        <div class="ribbon">
          <div class="panel w-views"><div class="pbody rows">
            <div class="dd dd-views"><svg class="i16"><use href="#r-view"/></svg><span class="dd-t">Unsaved View</span></div>
            <div class="row ind"><svg class="i16"><use href="#r-newv"/></svg><span>New View</span></div>
            <div class="row ind"><svg class="i16"><use href="#r-mgr"/></svg><span>View Manager</span></div>
          </div><div class="plabel"><span></span><span>Named Views</span><span></span></div></div>

          <div class="panel w-coords"><div class="pbody rows">
            <div class="row crow"><svg class="i16"><use href="#r-ax1"/></svg><i class="cr1"></i><svg class="i16 m1"><use href="#r-ax2"/></svg><svg class="i16 m2"><use href="#r-ax3"/></svg><svg class="i16 m3"><use href="#r-ax4"/></svg><svg class="i16 m3"><use href="#r-ax5"/></svg></div>
            <div class="row crow"><svg class="i16"><use href="#r-ax6"/></svg><i class="cr1"></i><svg class="i16 m1"><use href="#r-ax7"/></svg><svg class="i16 m2"><use href="#r-ax8"/></svg><svg class="i16 m3"><use href="#r-ax9"/></svg><svg class="i16 m3"><use href="#r-ax10"/></svg></div>
            <div class="row crow"><svg class="i16"><use href="#r-ax11"/></svg><i class="cr1"></i><div class="dd dd-top"><svg class="i18"><use href="#r-top"/></svg><span class="dd-t">Top</span></div></div>
          </div><div class="plabel"><span></span><span class="sh10">Coordinates</span><svg class="launch"><use href="#r-launch"/></svg></div></div>

          <div class="panel w-mv"><div class="pbody mv">
            <div class="big b-vp"><span class="bi"><svg class="vpi"><use href="#r-vp"/></svg></span>Viewport<br>Configuration<i class="cr"></i></div>
            <div class="rows ml7">
              <div class="row"><svg class="i16"><use href="#r-named"/></svg><span>Named</span></div>
              <div class="row"><svg class="i16"><use href="#r-join"/></svg><span>Join</span></div>
              <div class="row"><svg class="i16"><use href="#r-rest"/></svg><span>Restore</span></div>
            </div>
          </div><div class="plabel"><span></span><span>Model Viewports</span><span></span></div></div>

          <div class="panel w-vs"><div class="pbody rows">
            <div class="dd dd-vs"><svg class="i16"><use href="#r-xray"/></svg><span class="dd-t">X-Ray</span></div>
            <div class="row vsrow"><svg class="i18"><use href="#r-vs1"/></svg><i class="cr1"></i><svg class="i18 m4"><use href="#r-vs2"/></svg><svg class="i18 m5"><use href="#r-vs3"/></svg><i class="cr1"></i><svg class="i18 m5"><use href="#r-vs4"/></svg><i class="cr1"></i></div>
            <div class="row oprow"><span class="xr-btn"><svg class="i18"><use href="#r-xr2"/></svg></span><span class="op"><span class="op-on">Opacity</span></span><span class="opv">50</span></div>
          </div><div class="plabel"><span></span><span class="sh8">Visual Styles <i class="cr2"></i></span><svg class="launch"><use href="#r-launch"/></svg></div></div>

          <div class="panel w-lt"><div class="pbody hz">
            <div class="big b-cl"><span class="bi"><svg class="bi30"><use href="#r-light"/></svg></span>Create<br>Light<i class="cr"></i></div>
            <div class="big b-ns"><span class="bi"><svg class="bi30"><use href="#r-shadow"/></svg></span>No<br>Shadows<i class="cr"></i></div>
          </div><div class="plabel"><span></span><span class="sh12">Lights <i class="cr2"></i></span><svg class="launch"><use href="#r-launch"/></svg></div></div>

          <div class="panel w-sun"><div class="pbody hz">
            <div class="big b-sun on"><span class="bi"><svg class="bi30"><use href="#r-sun"/></svg></span>Sun<br>Status</div>
            <div class="big b-sky"><span class="bi"><svg class="bi30"><use href="#r-sky"/></svg></span>Sky Off<i class="cr-b"></i></div>
          </div><div class="plabel"><span></span><span class="sh8">Sun &amp; Location <i class="cr2"></i></span><svg class="launch"><use href="#r-launch"/></svg></div></div>

          <div class="panel w-mat"><div class="pbody rows ml4">
            <div class="row"><svg class="i16"><use href="#r-chk"/></svg><span>Materials Browser</span></div>
            <div class="row"><svg class="i16"><use href="#r-chk2"/></svg><span>Materials / Textures On</span><i class="cr1"></i></div>
            <div class="row"><svg class="i16"><use href="#r-map"/></svg><span>Material Mapping</span><i class="cr1"></i></div>
          </div><div class="plabel"><span></span><span class="sh14">Materials <i class="cr2"></i></span><svg class="launch"><use href="#r-launch"/></svg></div></div>

          <div class="panel w-cam"><div class="pbody rows center">
            <svg class="i18"><use href="#r-cam1"/></svg><svg class="i18"><use href="#r-cam2"/></svg>
          </div><div class="plabel plain"><span>Camera</span></div></div>

          <div class="panel w-rn"><div class="pbody hz">
            <div class="big b-rs"><span class="bi potsize"><svg class="pot"><use href="#r-pot"/></svg><svg class="sz"><use href="#r-size"/></svg></span>Render to Size<i class="cr-b"></i></div>
            <div class="rows rcol">
              <div class="dd"><span class="dd-t">Medium</span></div>
              <div class="dd"><span class="dd-t">Render in Win...</span></div>
              <div class="dd prog"><svg class="i16"><use href="#r-prog"/></svg><span class="bar-dark"></span></div>
            </div>
            <div class="big b-cd"><span class="bi"><svg class="bi30"><use href="#r-potc"/></svg></span>Render in<br>Cloud</div>
            <div class="big b-gl"><span class="bi"><svg class="galr"><use href="#r-gal"/></svg></span>Render<br>Gallery</div>
          </div><div class="plabel pl-rn"><span></span><span class="sh14">Render <i class="cr2"></i></span><svg class="launch"><use href="#r-launch"/></svg></div></div>
        </div>
        <div class="doctabs">
          <span class="dt">Start</span><span class="dt dt-on">Drawing project* <em>✕</em></span><span class="dt-plus">+</span>
        </div>

        <div class="viewport">
          <svg class="cad" viewBox="336 378 1255 484" preserveAspectRatio="none">
            <defs>
              <pattern id="grid" width="100" height="100" patternUnits="userSpaceOnUse" patternTransform="matrix(.47 .137 .395 -.575 1488 578)">
                <path d="M20 0V100M40 0V100M60 0V100M80 0V100M0 20H100M0 40H100M0 60H100M0 80H100" stroke="#232c38" stroke-width=".8"/>
                <path d="M0 0V100M0 0H100" stroke="#38424f" stroke-width="2.200"/>
              </pattern>
              <g id="plan">
                <path vector-effect="non-scaling-stroke" d="M0 0H100V100H0ZM2.500 2.500H97.500V97.500H2.500ZM40 0V100M42 0V100M78 0V100M80 0V100M0 47H40M0 49H40M42 62H78M42 64H78M80 25H100M80 27H100M80 50H100M80 52H100M60 64V100M62 64V100" fill="none"/>
              </g>
              <g id="shell">
                <path class="sf" d="M0 35 134 74 191-9 57-48z"/>
                <path class="sw" d="M0 0 134 39V74L0 35zM134 39 191-44V-9L134 74zM0 0 57-83V-48L0 35zM57-83 191-44V-9L57-48z"/>
                <path class="sw" d="M53.600 15.600 110.600-67.400V-32.400L53.600 50.600zM27.400-39.800 81-24.200V10.800L27.400-4.800zM104.500 30.400 161.500-52.600V-17.600L104.500 65.400zM92-35.900 140.400-21.900V13.100L92-.9zM122 9.600 148.800 17.400V52.400L122 44.600zM136.300-11.100 163-3.300V31.700L136.300 23.900z"/>
                <use href="#plan" class="sl" transform="matrix(1.340 .39 .57 -.83 0 35)"/>
                <use href="#plan" class="sl" transform="matrix(1.340 .39 .57 -.83 0 0)"/>
                <path class="sl" fill="none" d="M0 0v35M134 39v35M191-44v35M57-83v35M53.600 15.600v35M56 16.300v35M104.500 30.400v35M107 31v35M162.500-12v35M148.800-21.600v35M81.400-39.800v35M27.400-39.800v35M90-24.500v35M141-9v35M110.600-67.400v35M161.500-52.600v35"/>
                <g class="win">
                  <path d="M18 15 40 21 39 34 18 28z"/><path class="wi" d="M20.500 18.500 37.500 23 36.800 31.500 20.500 26z"/>
                  <path d="M68 31 89 37 88 49 67 44z"/><path class="wi" d="M70.500 34.500 86.500 39 86 46.500 69.500 41.500z"/>
                  <path d="M110 43 125 47 124 59 110 55z"/><path class="wi" d="M112.500 46.500 122.500 49 122 56.500 112.500 53z"/>
                  <path d="M138 36 148 23V37L138 50z"/><path class="wi" d="M140 36.500 146 28V36.500L140 45z"/>
                  <path d="M174-18 178-24V0L174 6z"/>
                  <path d="M27 -18 33-26V-6L27 2z"/>
                </g>
              </g>
              <g id="rim">
                <path d="M-3 0 134 40.500 193-44"/><path d="M-3 3 134 44 192-38"/>
              </g>
            </defs>
            <rect x="336" y="378" width="1255" height="484" fill="#1f2733"/>
            <rect x="336" y="378" width="1255" height="484" fill="url(#grid)"/>
            <path d="M672 380 336 852" stroke="#2b6b2e" fill="none"/>

            <!-- upper house with its roof -->
            <g class="shell-gray" transform="translate(657 498)">
              <use href="#shell"/>
              <path d="M-2 0 57-85 194-45 135 41z" fill="#fff" fill-opacity=".38" stroke="#dcdcdc" stroke-width="1.800"/>
              <use href="#plan" class="sl" transform="matrix(1.340 .39 .57 -.83 0 0)"/>
            </g>
            <!-- lower house, no roof -->
            <g class="shell-gray" transform="translate(578 633) scale(.97)">
              <use href="#shell"/>
              <path d="M-2 36 134 76 193-8" fill="none" stroke="#d8d8d8" stroke-width="1.400"/>
            </g>
            <path d="M637 593 662 600 649 612 628 604zM675 625 698 630 680 658 655 652z" fill="#12181f" stroke="#c4c4c4" stroke-width=".8"/>

            <!-- flat floor plan -->
            <g transform="translate(560 400) scale(.33333)" class="fplan">
              <path d="M838 595 1160 685 1140 695 1270 718 1195 830 1145 815 1130 840 1095 890 1060 945 672 830z"/>
              <path d="M750 737 895 778 935 720M975 640 955 685 1140 735M1085 655 1055 705M1155 685 1120 725M865 815 830 875M1050 810 1150 830M1060 785 1045 810 1085 825M1030 845 1130 870M1010 870 975 915M800 640 740 730"/>
              <path class="dd2" d="M945 720Q985 725 990 695M840 778Q840 805 875 812M1082 770Q1105 765 1115 740M1060 822Q1085 830 1070 845"/>
              <path class="dash" d="M880 610 950 630M730 845 785 860M865 875 975 912M1060 945 1100 885M715 770 690 810M805 650 780 690M1230 770 1200 815"/>
              <g class="ftext">
                <text transform="translate(845 690) rotate(16)">Bed Room</text><text transform="translate(750 803) rotate(16)">Bed Room</text><text transform="translate(955 805) rotate(16)">Dining</text><text transform="translate(1145 755) rotate(16)">Kitchen</text><text transform="translate(1065 830) rotate(16)">Attached</text><text transform="translate(1025 895) rotate(16)">Balcony</text><text transform="translate(995 673) rotate(16)">Wash</text><text transform="translate(1085 695) rotate(16)">Up</text>
              </g>
            </g>

            <!-- yellow building -->
            <path d="M1047 573 1104 490 1238 531 1236 670 1208 712 1208 750 1179 789 1049 752z" fill="#5f5e17"/>
            <path d="M1047 573 1104 490 1238 531 1180 613z" fill="#74731c"/>
            <path d="M1180 613 1238 531 1236 670 1208 712 1208 750 1179 789z" fill="#696818"/>
            <path d="M1236 672 1252 677 1223 712 1210 708z" fill="#2a6f66" stroke="#b9d9d0"/>
            <path d="M1208 712 1223 715V752L1208 748zM1240 692 1249 684 1248 718 1243 722V702L1232 712V722L1238 722z" fill="#4f5018" stroke="#d5d59a"/>
            <g class="shell-yel">
              <use href="#shell" transform="translate(1047 573)"/>
              <use href="#shell" transform="translate(1047 608.500)"/>
              <use href="#shell" transform="translate(1047 644)"/>
              <use href="#shell" transform="translate(1047 679.500)"/>
              <use href="#shell" transform="translate(1047 715)"/>
            </g>
            <g class="rim-y">
              <use href="#rim" transform="translate(1047 573)"/>
              <use href="#rim" transform="translate(1047 608.500)"/>
              <use href="#rim" transform="translate(1047 644)"/>
            </g>
            <path class="rim-y" d="M1044 573 1104 489 1240 530"/>
            <g class="rim-b">
              <use href="#rim" transform="translate(1047 679.500)"/>
              <use href="#rim" transform="translate(1047 715)"/>
            </g>
            <path d="M1067 661 1085 666 1085 678 1067 673zM1115 674 1135 680V692L1115 686zM1159 688 1170 691V702L1159 699zM1067 697 1085 702 1085 714 1067 709zM1115 710 1135 716V728L1115 722zM1159 724 1170 727V738L1159 735z" fill="#2c7a6d" fill-opacity=".55"/>
            <g transform="translate(1047 715)" class="win-d">
              <path d="M18 15 40 21 39 34 18 28z"/><path d="M68 31 89 37 88 49 67 44z"/><path d="M112 43 125 47 124 59 112 55z"/>
            </g>
            <g class="ftext2" transform="translate(1067 737) rotate(16)"><text>Bed Room</text></g>

            <!-- UCS crosshair -->
            <path d="M1278 675V727" stroke="#5a5fd0" stroke-width="1.400"/>
            <path d="M1257 704 1320 722" stroke="#c8474c" stroke-width="1.200"/>
            <path d="M1269 723 1297 683" stroke="#46a84c" stroke-width="1.200"/>
            <rect x="1274.500" y="706.500" width="6" height="6" fill="none" stroke="#e4e4e4"/>
            <circle cx="1288" cy="700" r="3" fill="#e5e5e5"/><path d="M1285 700h6" stroke="#333"/>

            <!-- UCS icon -->
            <path d="M382 778V812" stroke="#4f77ad" stroke-width="4" stroke-linecap="round"/>
            <path d="M385 812 400 785" stroke="#3f8f3e" stroke-width="4" stroke-linecap="round"/>
            <path d="M384 812 423 825" stroke="#d98a8a" stroke-width="3.400" stroke-linecap="round"/>
            <path d="M380 765h9l-9 11h9" fill="none" stroke="#2466b8" stroke-width="1.200"/>
            <path d="M398 771l5 4 4-5M403 775v6" fill="none" stroke="#2f8a35" stroke-width="1.100"/>
            <path d="M420 809l9 12m0-12-9 12" fill="none" stroke="#b93a3e" stroke-width="1.100"/>

            <!-- ViewCube -->
            <g transform="translate(1400 420) scale(.33333)">
              <ellipse cx="400" cy="172" rx="118" ry="78" fill="none" stroke="#3e4855" stroke-width="22"/>
              <path d="M380 40 465 62 425 120 335 95z" fill="#b4b6b8"/>
              <path d="M335 95 425 120 428 190 340 165z" fill="#b9bbbc"/>
              <path d="M465 62 425 120 428 190 460 140z" fill="#a5a8ab"/>
              <path d="M335 95 425 120 465 62M425 120 428 190" fill="none" stroke="#4a4e54" stroke-width="3" stroke-dasharray="12 5"/>
              <g class="vc-t"><text transform="translate(385 82) rotate(12)">TOP</text><text transform="translate(348 142) rotate(14)">FRONT</text></g>
              <g class="vc-l"><text transform="translate(280 130) rotate(25)">W</text><text transform="translate(325 255) rotate(12)">S</text><text transform="translate(495 205) rotate(-15)">E</text></g>
            </g>
          </svg>

          <div class="vp-label">[−][Custom View][X-Ray]</div>
          <div class="vp-ctl"><svg class="ctl2"><use href="#t-min"/></svg><svg class="ctl2"><use href="#t-rest"/></svg><svg class="ctl2"><use href="#t-x"/></svg></div>
          <div class="unnamed"><span>Unnamed</span><i></i></div>
          <div class="navbar">
            <svg viewBox="0 0 30 196" class="nav-svg">
              <g fill="none" stroke="#4e555d" stroke-width="1.300">
                <circle cx="24" cy="5" r="3"/>
                <path d="M5 20q10-4 20-2v14q-2 6-10 6-8 0-10-6z"/><circle cx="15" cy="28" r="6"/>
                <path d="M8 52v7l7 9h8l2-12v-5M10 45v10M14 43v12M18 44v11M22 46v8"/>
                <path d="M4 83l12 12M16 83 4 95M4 83h3M4 83v3"/><circle cx="19" cy="98" r="4"/><path d="m22 101 4 4"/>
                <path d="M14 121v20M10 125l4-4 4 4"/><ellipse cx="14" cy="132" rx="10" ry="4"/>
                <rect x="4" y="157" width="6" height="5"/><rect x="12" y="157" width="6" height="5"/><rect x="20" y="157" width="6" height="5"/><rect x="4" y="164" width="15" height="11"/>
                <circle cx="24" cy="190" r="3"/>
              </g>
              <path d="m9 168 6 2.500-6 3zM13 45l2 2 2-2zM13 109l2 2 2-2zM13 144l2 2 2-2z" fill="#4e555d"/>
            </svg>
          </div>
          <div class="cmd-hist"><span>Command:</span><span>Command:</span><span>Command:</span></div>
          <div class="cmdline">
            <div class="cmd-h"><i class="grip"></i><span class="cmd-x">✕</span><svg class="i14"><use href="#c-wrench"/></svg></div>
            <div class="cmd-in"><svg class="cmd-t"><use href="#c-term"/></svg><i class="cr-d"></i><span class="cmd-ph">Type a command</span><i class="cr-u"></i></div>
          </div>
        </div>

        <div class="statusrow">
          <div class="ltabs"><span class="lt lt-on">Model</span><span class="lt">Layout1</span><span class="lt">Layout2</span><span class="lt lt-p">+</span></div>
          <div class="sgroups">
            <span class="sg sg-t">MODEL</span>
            <span class="sg g58"><span class="sb on"><svg class="i16"><use href="#s-grid"/></svg></span><span class="sb"><svg class="i16"><use href="#s-snap"/></svg></span><i class="cr1"></i></span>
            <span class="sg g95"><span class="sb on"><svg class="i16"><use href="#s-ortho"/></svg></span><span class="sb"><svg class="i16"><use href="#s-polar"/></svg></span><i class="cr1"></i><span class="sb"><svg class="i16"><use href="#s-iso"/></svg></span><i class="cr1"></i></span>
            <span class="sg g58"><span class="sb on"><svg class="i16"><use href="#s-osnap"/></svg></span><span class="sb"><svg class="i16"><use href="#s-trans"/></svg></span><i class="cr1"></i></span>
            <span class="sg g97"><span class="sb on"><svg class="i16"><use href="#s-anno"/></svg></span><span class="sb"><svg class="i16"><use href="#s-anno"/></svg></span><span class="sb"><svg class="i16"><use href="#s-anno2"/></svg></span><span class="sg-11">1:1</span><i class="cr1"></i></span>
            <span class="sg g60"><span class="sb"><svg class="i16"><use href="#s-gear"/></svg></span><i class="cr1"></i><span class="sb"><svg class="i16"><use href="#s-plus"/></svg></span></span>
            <span class="sg g22"><span class="sb"><svg class="i16"><use href="#s-shapes"/></svg></span></span>
            <span class="sg g28"><span class="sb"><svg class="i16"><use href="#s-print"/></svg></span></span>
            <span class="sg g41"><span class="sb"><svg class="i16"><use href="#s-full"/></svg></span><span class="sb"><svg class="i16"><use href="#s-menu"/></svg></span></span>
          </div>
        </div>

        <div class="intask">
          <span class="it-logo"><svg class="i16"><use href="#w-logo"/></svg></span>
          <div class="it-search"><svg class="i16"><use href="#w-search"/></svg><span>Type here to search</span></div>
          <span class="it"><span class="cortana"></span></span>
          <span class="it"><svg class="i18"><use href="#w-task"/></svg></span>
          <span class="it it-first"><svg class="i22"><use href="#w-edge"/></svg></span>
          <span class="it under"><svg class="i22"><use href="#w-folder"/></svg></span>
          <span class="it"><svg class="i22"><use href="#w-store"/></svg></span>
          <span class="it"><svg class="i22"><use href="#w-fire"/></svg></span>
          <span class="it"><svg class="i22"><use href="#w-blend"/></svg></span>
          <span class="it"><svg class="i22"><use href="#w-notes"/></svg></span>
          <span class="it"><svg class="i22"><use href="#w-subl"/></svg></span>
          <span class="it under"><svg class="i22"><use href="#w-chrome"/></svg></span>
          <span class="it"><svg class="i22"><use href="#w-opera"/></svg></span>
          <span class="it it-on"><svg class="i22"><use href="#w-acad"/></svg></span>
          <span class="it under"><svg class="i22"><use href="#w-adobe"/></svg></span>
          <svg class="i22 itw"><use href="#w-cloud"/></svg><span class="it-temp">30°C</span>
          <i class="chev chev-in"></i><svg class="i18 it-b"><use href="#w-batt"/></svg><svg class="i16 it-v"><use href="#w-vol"/></svg><svg class="i14 it-w"><use href="#w-wifi"/></svg><span class="it-eng">ENG</span>
          <span class="it-clock"><span>2:50 PM</span><span>29/08/2021</span></span>
          <svg class="i16 it-n"><use href="#w-note2"/></svg>
        </div>
      </section>

      <section class="acad second">
        <div class="titlebar">
          <div class="tb-left tb-left2">
            <span class="acad-a">A</span><i class="cr1"></i>
            <svg class="qi qi-first"><use href="#t-new"/></svg><svg class="qi"><use href="#t-open"/></svg><svg class="qi"><use href="#t-save"/></svg><svg class="qi"><use href="#t-saveas"/></svg><svg class="qi"><use href="#t-ph1"/></svg><svg class="qi"><use href="#t-ph2"/></svg><svg class="qi"><use href="#t-print"/></svg><svg class="qi qi-und"><use href="#t-undo"/></svg><i class="cr1"></i><svg class="qi qi-red"><use href="#t-undo"/></svg><i class="cr1 dim"></i><i class="cr1 bar"></i>
            <svg class="qi qi-pl"><use href="#t-plane"/></svg><span class="share">Share</span>
          </div>
          <div class="tb-title tb-title2"><span class="t-app">Autodesk AutoCAD 2022</span><span>Drawing project.dwg</span></div>
          <div class="tb-right">
            <i class="tri-r"></i><span class="kw">Type a keyword or phrase</span>
            <svg class="qi mag"><use href="#t-mag"/></svg><svg class="qi usr"><use href="#t-user"/></svg><span class="uname">freelancershi...</span><i class="cr1 c-u"></i>
            <svg class="qi cart"><use href="#t-cart"/></svg><svg class="qi a2"><use href="#t-a"/></svg><i class="cr1"></i><span class="tsep"></span><svg class="qi help"><use href="#t-help"/></svg><i class="cr1"></i>
            <svg class="ctl c-min"><use href="#t-min"/></svg><svg class="ctl"><use href="#t-rest"/></svg><svg class="ctl"><use href="#t-x"/></svg>
          </div>
        </div>
        <nav class="rtabs">
          <span>Home</span><span>Solid</span><span>Surface</span><span>Mesh</span><span class="on">Visualize</span><span>Parametric</span><span>Insert</span><span>Annotate</span><span>View</span><span>Manage</span><span>Output</span><span>Add-ins</span><span>Collaborate</span><span>Express Tools</span><span>Featured Apps</span><svg class="rt-mini" viewBox="0 0 20 10"><rect width="14" height="10" fill="#e8eaed"/><path d="m4 7 3-3 3 3z" fill="#555"/><path d="m16 4 4 0-2 3z" fill="#ccc"/></svg>
        </nav>
        <div class="ribbon ribbon2">
          <div class="panel w-views"><div class="pbody rows">
            <div class="dd dd-views"><svg class="i16"><use href="#r-view"/></svg><span class="dd-t">Unsaved View</span></div>
            <div class="row ind"><svg class="i16"><use href="#r-newv"/></svg><span>New View</span></div>
            <div class="row ind"><svg class="i16"><use href="#r-mgr"/></svg><span>View Manager</span></div>
          </div></div>
          <div class="panel w-coords"><div class="pbody rows">
            <div class="row crow"><svg class="i16"><use href="#r-ax1"/></svg><i class="cr1"></i><svg class="i16 m1"><use href="#r-ax2"/></svg><svg class="i16 m2"><use href="#r-ax3"/></svg><svg class="i16 m3"><use href="#r-ax4"/></svg><svg class="i16 m3"><use href="#r-ax5"/></svg></div>
            <div class="row crow"><svg class="i16"><use href="#r-ax6"/></svg><i class="cr1"></i><svg class="i16 m1"><use href="#r-ax7"/></svg><svg class="i16 m2"><use href="#r-ax8"/></svg><svg class="i16 m3"><use href="#r-ax9"/></svg><svg class="i16 m3"><use href="#r-ax10"/></svg></div>
            <div class="row crow"><svg class="i16"><use href="#r-ax11"/></svg><i class="cr1"></i><div class="dd dd-top"><svg class="i18"><use href="#r-top"/></svg><span class="dd-t">Top</span></div></div>
          </div></div>
          <div class="panel w-mv"><div class="pbody mv">
            <div class="big b-vp"><span class="bi"><svg class="vpi"><use href="#r-vp"/></svg></span>Viewport<br>Configuration<i class="cr"></i></div>
            <div class="rows ml7">
              <div class="row"><svg class="i16"><use href="#r-named"/></svg><span>Named</span></div>
              <div class="row"><svg class="i16"><use href="#r-join"/></svg><span>Join</span></div>
              <div class="row"><svg class="i16"><use href="#r-rest"/></svg><span>Restore</span></div>
            </div>
          </div></div>
          <div class="panel w-vs"><div class="pbody rows">
            <div class="dd dd-vs"><svg class="i16"><use href="#r-shaded"/></svg><span class="dd-t">Shaded with edges</span></div>
            <div class="row vsrow"><svg class="i18"><use href="#r-vs1"/></svg><i class="cr1"></i><svg class="i18 m4"><use href="#r-vs2"/></svg><svg class="i18 m5"><use href="#r-vs3"/></svg><i class="cr1"></i><svg class="i18 m5"><use href="#r-vs4"/></svg><i class="cr1"></i></div>
            <div class="row oprow op-dis"><span class="xr-btn"><svg class="i18"><use href="#r-xr2"/></svg></span><span class="op">Opacity</span><span class="opv">60</span></div>
          </div></div>
          <div class="panel w-lt"><div class="pbody hz">
            <div class="big b-cl"><span class="bi"><svg class="bi30"><use href="#r-light"/></svg></span>Create<br>Light<i class="cr"></i></div>
            <div class="big b-ns"><span class="bi"><svg class="bi30"><use href="#r-shadow"/></svg></span>No<br>Shadows<i class="cr"></i></div>
          </div></div>
          <div class="panel w-sun"><div class="pbody hz">
            <div class="big b-sun"><span class="bi"><svg class="bi30"><use href="#r-sun"/></svg></span>Sun<br>Status</div>
            <div class="big b-sky"><span class="bi"><svg class="bi30"><use href="#r-sky"/></svg></span>Sky Off<i class="cr-b"></i></div>
          </div></div>
          <div class="panel w-mat2"><div class="pbody rows ml4">
            <div class="row"><svg class="i16"><use href="#r-chk"/></svg><span>Materials Browser</span></div>
            <div class="row"><svg class="i16"><use href="#r-chk3"/></svg><i class="cr1"></i></div>
            <div class="row"><svg class="i16"><use href="#r-map"/></svg><span>Material Mapping</span><i class="cr1"></i></div>
          </div></div>
          <div class="panel w-cam"><div class="pbody rows center">
            <svg class="i18"><use href="#r-cam1"/></svg><svg class="i18"><use href="#r-cam2"/></svg>
          </div></div>
          <div class="panel w-rn2"><div class="pbody hz">
            <div class="big b-rs b-rs2"><span class="bi potsize"><svg class="pot"><use href="#r-pot"/></svg><svg class="sz"><use href="#r-size"/></svg></span>Render to Size<i class="cr-b"></i></div>
            <div class="rows rcol">
              <div class="dd"><span class="dd-t">Medium</span></div>
              <div class="dd"><span class="dd-t">Render in Win...</span></div>
              <div class="dd prog"><svg class="i16"><use href="#r-prog"/></svg><span class="bars"><i></i><i></i></span></div>
            </div>
            <div class="big b-cd"><span class="bi"><svg class="bi30"><use href="#r-potc"/></svg></span>Render in<br>Cloud</div>
            <div class="big b-gl"><span class="bi"><svg class="galr"><use href="#r-gal"/></svg></span>Render<br>Gallery</div>
          </div></div>
        </div>
      </section>
    </div>
  </div>
  <div class="thumb"></div>
</main>

<footer class="taskbar">
  <span class="tb-logo"><svg class="i16"><use href="#w-logo"/></svg></span>
  <div class="tb-search">
    <svg class="i20"><use href="#w-search"/></svg><span class="tb-stext">Type here to search</span>
    <svg class="books" viewBox="0 0 76 40">
      <rect x="47" y="4" width="9" height="36" fill="#e88ab0"/><rect x="55" y="0" width="9" height="40" fill="#e9c84a"/><rect x="55" y="8" width="9" height="28" fill="#a67ae0"/><rect x="63" y="6" width="8" height="34" fill="#c26a3a"/><rect x="70" y="2" width="6" height="38" fill="#3e8a58"/><rect x="41" y="14" width="5" height="26" fill="#4a7ad0"/>
      <rect x="0" y="20" width="36" height="10" rx="2" fill="#e8b84a"/><rect x="8" y="22" width="20" height="6" rx="2" fill="#f08a8a"/><rect x="0" y="30" width="36" height="10" fill="#5eae4a"/>
      <ellipse cx="16" cy="12" rx="6" ry="7" fill="#3a8ae0"/><circle cx="12" cy="5" r="3.500" fill="#3a8ae0"/><path d="m9 4-3 1 3 1z" fill="#f0b030"/>
    </svg>
  </div>
  <span class="c c0"><svg class="i20"><use href="#w-task"/></svg></span>
  <span class="c c1"><svg class="i26"><use href="#w-edge"/></svg></span>
  <span class="c cu"><svg class="i26"><use href="#w-folder"/></svg></span>
  <span class="c"><svg class="i26"><use href="#w-store"/></svg></span>
  <span class="c"><svg class="i26"><use href="#w-mail"/></svg></span>
  <span class="c cu con"><svg class="i26"><use href="#w-chrome"/></svg><span class="badge b1"></span></span>
  <span class="c cu"><svg class="i26"><use href="#w-note"/></svg></span>
  <span class="c cu"><svg class="i26"><use href="#w-chrome"/></svg><span class="badge b2"></span></span>
  <div class="tray">
    <svg class="i24"><use href="#w-haze"/></svg><span class="w-t">83°F</span><span class="w-h">Haze</span>
    <i class="chev"></i><svg class="i16 tr1"><use href="#w-bars"/></svg><svg class="i16 tr2"><use href="#w-off"/></svg><svg class="i16 tr3"><use href="#w-net"/></svg><svg class="i16 tr4"><use href="#w-vol"/></svg>
    <span class="clock"><span>1:18 AM</span><span>9/9/2023</span></span>
    <svg class="i16 tr5"><use href="#w-note2"/></svg>
  </div>
</footer>
</body>
</html>
```
FILE: styles.css
```css
*{box-sizing:border-box}
html,body{margin:0;padding:0}
body{width:1920px;height:1080px;overflow:hidden;display:flex;flex-direction:column;background:#fff;font-family:"Liberation Sans",Arial,sans-serif}
.defs{display:block;height:0;width:0;position:absolute}
svg{display:block;flex:none}
i{font-style:normal;display:block;flex:none}

/* browser chrome */
.chrome{flex:none}
.tabstrip{height:34px;background:#dee1e6;display:flex;padding-left:8px;overflow:hidden}
.tab{width:103px;flex:none;display:flex;align-items:center;padding-left:12px;background:linear-gradient(#8a8d91,#8a8d91) right center/1px 20px no-repeat}
.tab-plain{background:none}
.tab-r{width:101.800px;padding-left:8px}
.tab-active{width:105px;flex:none;margin-left:-2px;margin-right:2px;background:#fff;border-radius:9px 9px 0 0;display:flex;align-items:center;padding-left:9px}
.fav{width:16px;height:16px;margin-right:8px}
.tab-t{width:43px;overflow:hidden;white-space:nowrap;font-size:12px;color:#45494e;-webkit-mask-image:linear-gradient(90deg,#000 80%,transparent);mask-image:linear-gradient(90deg,#000 80%,transparent)}
.tab-x{margin-left:1px;font-size:11px;color:#3c4043;width:14px;text-align:center}
.newtab{width:12px;height:12px;margin:11px 0 0 15px}
.winbtns{margin-left:auto;display:flex}
.winbtn{width:46px;height:34px;display:flex;align-items:center;justify-content:center}
.wb{width:10px;height:10px}
.toolbar{height:39px;display:flex;padding:4px 0 0 5px;background:#fff}
.tbtn{width:32px;height:34px;flex:none;display:flex;align-items:center;justify-content:center}
.ti{width:16px;height:16px}
.omni{width:1638px;margin-left:8px;height:34px;border-radius:17px;background:#f1f3f4;display:flex;align-items:center;padding-left:11px}
.lock{width:12px;height:14px;margin-right:10px}
.url{flex:1;font-size:14px;color:#6b6f73;white-space:nowrap}
.url b{font-weight:400;color:#202124}
.tools-r{display:flex;margin-left:6px}
.avatar{width:20px;height:24px}
.bookmarks{height:36px;padding-left:13px;display:flex;align-items:center;gap:15px;font-size:12px;color:#3c4043;border-bottom:1px solid #c9cacc;padding-bottom:1px}
.bm{display:flex;align-items:center}
.bm .fav{margin-right:9px}

/* pdf style viewer */
.viewer{flex:1;min-height:0;display:flex;justify-content:center;overflow:hidden;position:relative;background:linear-gradient(90deg,#333 0,#2c2c2c 160px,#2c2c2c 1760px,#333 100%);box-shadow:inset 0 1px #111}
.page{width:1600px;background:#fff;padding:109px 0 0 176px;overflow:hidden}
.thumb{position:absolute;left:1896px;top:595px;width:16px;height:96px;border-radius:8px;background:#444645}
.shot{width:1255px;height:822px;overflow:hidden;filter:blur(.4px);font-family:Roboto,"Liberation Sans",sans-serif;font-size:11px;color:#c8cdd4}

/* autocad window */
.titlebar{height:25px;padding-bottom:5px;background:#1f2733;display:flex;align-items:center}
.second .titlebar{background:#202935}
.tb-left{width:347px;display:flex;align-items:center;padding-left:3px}
.tb-left2{width:411px}
.acad-a{width:16px;font:700 17px "Liberation Sans",sans-serif;color:#c0272d;text-align:center;margin-right:3px}
.cr1{width:0;height:0;border:3px solid transparent;border-top-color:#c5cad0;border-bottom-width:0;margin:0 2px}
.cr1.dim{border-top-color:#7a828d;margin-right:4px}
.cr1.bar{border-top-color:#d0d4d9;margin:0 3px 0 4px;box-shadow:0 -3px 0 -2px #d0d4d9}
.qi{width:16px;height:16px;color:#e6e8eb}
.qi+.qi{margin-left:6px}
.qi-first{margin-left:12px}
.qi-und{margin-left:6px}
.qi-red{color:#6b7480;transform:scaleX(-1);margin-left:7px}
.qi-pl{margin-left:6px;margin-right:3px}
.share{color:#62aee8}
.tb-title{width:378px;display:flex;gap:10px;white-space:nowrap;color:#d4d8dd}
.tb-title2{width:314px}
.tb-right{flex:1;display:flex;align-items:center}
.tri-r{width:0;height:0;border:3px solid transparent;border-left:4px solid #c5cad0;border-right:0;margin-right:7px}
.kw{width:163px;height:17px;background:#3a4558;color:#9aa3ae;font-style:italic;line-height:17px;padding-left:3px}
.mag{margin-left:5px;color:#b6bcc5}
.qi+.usr{margin-left:7px;width:14px}
.uname{margin-left:5px;width:73px;white-space:nowrap;color:#d4d8dd}
.c-u{margin-left:5px}
.cart{margin-left:6px;width:14px;height:14px}
.qi+.a2{margin-left:7px;width:13px;height:13px}
.tsep{width:1px;height:16px;background:#3a4453;margin:0 9px 0 6px}
.help{width:15px;height:15px}
.c-min{margin-left:64px}
.ctl{width:12px;height:12px}
.ctl+.ctl{margin-left:11px}
.rtabs{height:19px;background:#1f2733;display:flex;align-items:center;padding-left:3px;color:#aeb5be}
.rtabs span{padding:0 9px;height:19px;line-height:19px;white-space:nowrap}
.rtabs span:first-child{padding-right:11px}
.rtabs span:nth-child(4){margin-left:-1px}
.rtabs span:nth-child(5){margin-left:-1px}
.rtabs span:nth-child(6){margin-left:-2px}
.rtabs span:nth-child(7){margin-left:-1px}
.rtabs span:nth-child(8){margin-left:2px}
.rtabs .on{background:#333e4d;color:#e4e7ea}
.rt-mini{width:20px;height:8px;margin-left:20px}
.ribbon{height:90px;display:flex;background:#333e4d}
.ribbon2{height:73px;overflow:hidden}
.panel{flex:none;height:90px;border-right:2px solid #262f3b;display:flex;flex-direction:column}
.w-views{width:103px}.w-coords{width:134px}.w-mv{width:160px}.w-vs{width:144px}.w-lt{width:115px}.w-sun{width:110px}.w-mat{width:153px}.w-mat2{width:129px}.w-cam{width:48px}.w-rn{width:289px;border-right:0}.w-rn2{width:312px;border-right:0}
.pbody{height:71px;flex:none}
.plabel{height:19px;display:grid;grid-template-columns:1fr auto 1fr;align-items:center;text-align:center;background:#313c4a;color:#c4c9d0}
.plabel.plain{display:flex;justify-content:center}
.pl-rn{padding-right:18px}
.sh8{margin-right:7px}.sh10{margin-right:10px}.sh12{margin-right:12px}.sh14{margin-right:14px}
.launch{width:8px;height:8px;justify-self:end;margin-right:2px}
.cr2{display:inline-block;border:3px solid transparent;border-top-color:#c4c9d0;border-bottom-width:0;margin-left:3px;vertical-align:1px}
.rows{display:flex;flex-direction:column;gap:4px;padding-top:6px}
.row{height:18px;display:flex;align-items:center;white-space:nowrap}
.row svg+span{margin-left:4px}
.ind{padding-left:6px}
.ind svg+span{margin-left:5px}
.i14{width:14px;height:14px}.i16{width:16px;height:16px}.i18{width:18px;height:18px}.i20{width:20px;height:20px}.i22{width:22px;height:22px}.i24{width:24px;height:24px}.i26{width:26px;height:26px}
.dd{height:18px;background:#445064;box-shadow:0 0 0 1px #2a3441;display:flex;align-items:center;padding:0 12px 0 2px;position:relative;white-space:nowrap;flex:none}
.dd::after{content:"";position:absolute;right:4px;top:7px;border:4px solid transparent;border-top-color:#cfd3d8;border-bottom-width:0}
.dd-t{overflow:hidden;margin-left:2px;color:#cfd4da}
.dd-views{width:95px;margin-left:5px}
.crow{padding-left:6px}
.m1{margin-left:10px}.m2{margin-left:10px}.m3{margin-left:6px}.m4{margin-left:4px}.m5{margin-left:5px}
.dd-top{width:91px;margin-left:8px}
.mv{display:flex}
.big{text-align:center;line-height:13.500px;padding-top:4px;flex:none;white-space:nowrap;display:block}
.bi{display:flex;height:36px;align-items:flex-start;justify-content:center}
.cr{display:inline-block;width:0;height:0;border:3px solid transparent;border-top-color:#c5cad0;margin:0 -12px 0 6px;vertical-align:5px}
.cr-b{display:block;width:0;height:0;border:3px solid transparent;border-top-color:#aab0b8;margin:3px auto 0}
.b-vp{width:90px}
.vpi{width:30px;height:28px;margin-top:4px}
.ml7{margin-left:5px}
.ml4{padding-left:4px}
.dd-vs{width:136px;margin-left:4px}
.vsrow{padding-left:5px}
.oprow{padding-left:2px;height:20px;margin-top:-1px}
.xr-btn{width:22px;height:20px;border:1px solid #5aa0d8;display:flex;align-items:center;justify-content:center;background:#3f4c60;flex:none}
.xr-btn svg{width:15px;height:15px}
.op{width:87px;height:18px;margin-left:5px;background:#2c3644;display:block;flex:none;color:#6b7684;line-height:18px}
.op-on{display:block;width:46px;background:#4a6a96;padding-left:4px;height:18px}
.opv{width:23px;height:18px;margin-left:1px;background:#3c4759;text-align:center;line-height:18px;color:#cfd4da;flex:none}
.op-dis .xr-btn{border-color:transparent;background:none}
.op-dis .op{padding-left:4px;background:#3c4759}
.op-dis .opv{color:#6b7684}
.hz{display:flex}
.bi30{width:30px;height:30px}
.galr{width:24px;height:29px;margin-top:1px}
.b-cl{width:54px}
.b-ns{width:60px}
.b-sun{width:34px;margin-left:12px;height:65px;margin-top:5px;padding-top:0;border:1px solid transparent}
.b-sun .bi{height:35px}
.b-sun.on{border-color:#5aa0d8;background:#3f4c60}
.b-sky{width:44px;margin-left:4px;color:#6b7684}
.w-cam .center{align-items:center;gap:4px}
.b-rs{width:93px}
.b-rs2{width:92px}
.potsize{flex-direction:column;align-items:center}
.pot{width:30px;height:24px}
.sz{width:14px;height:14px;margin:-7px 0 0 0}
.rcol{width:91px;gap:3px}
.rcol .dd{width:91px;padding-left:2px}
.prog{height:19px;background:#2a3441;padding:0}
.prog::after{display:none}
.prog .i16{margin:0 2px}
.bar-dark{flex:1;height:16px;background:#445064}
.bars{flex:1;display:flex;flex-direction:column;gap:3px}
.bars i{height:7px;background:#7fac3c}
.b-cd{width:50px}
.b-gl{width:44px}
.doctabs{background:#1f2733;display:flex;align-items:flex-end;padding:0 0 3px 19px;border-bottom:3px solid #39434f;height:29px}
.dt{width:113px;height:23px;background:#2a3341;border-radius:8px 8px 0 0;line-height:23px;padding-left:10px;color:#aeb5be;margin-bottom:-3px}
.dt-on{width:122px;margin-left:2px;background:#333e4d;font-weight:700;color:#d4d8dd;padding-left:9px;white-space:nowrap}
.dt-on em{font-style:normal;font-weight:400;color:#8f97a1;margin-left:4px}
.dt-plus{width:17px;height:17px;margin:0 0 0 8px;color:#aeb5be;background:#2a3341;border-radius:3px;text-align:center;line-height:16px;font-size:14px}

/* drawing area */
.viewport{height:481px;position:relative;overflow:hidden;background:#1f2733}
.cad{position:absolute;left:0;top:-3px;width:1255px;height:484px}
.sl{stroke:var(--line);stroke-width:var(--lw);fill:none}
.sf{fill:var(--fl)}
.sw{fill:var(--wl)}
.shell-gray{--line:#dcdcdc;--lw:1;--fl:rgba(200,200,200,.42);--wl:rgba(190,190,190,.2);--win:#1b222d;--wln:#f4f4f4;--wsw:1.200}
.shell-yel{--line:#b4b458;--lw:.8;--fl:rgba(190,190,60,.08);--wl:rgba(190,190,60,.05);--win:none;--wln:#f2f2cc;--wsw:1.300}
.win path{stroke:var(--wln);stroke-width:var(--wsw);fill:var(--win)}
.win .wi{stroke-width:.9}
.rim-y,.rim-y path,.rim-y use{fill:none;stroke:#e6e6b2;stroke-width:1.100}
.rim-b{fill:none;stroke:#bfe0d6;stroke-width:1.100}
.win-d path{fill:#0f1319;stroke:#f4f4f4;stroke-width:1.300}
.ftext2 text{font:3.500px "Liberation Sans",sans-serif;fill:#fff}
.fplan path{fill:none;stroke:#e6e6e6;stroke-width:4}
.fplan .dash{stroke-dasharray:3 3;stroke-width:6}
.fplan .dd2{stroke-width:3}
.ftext text{font:14px "Liberation Sans",sans-serif;fill:#f2f2f2}
.vc-t text{font:700 17px "Liberation Sans",sans-serif;fill:#555a60}
.vc-l text{font:italic 700 36px "Liberation Sans",sans-serif;fill:#c8ccd0}
.vp-label{position:absolute;left:2px;top:6px;color:#c8ccd2}
.vp-ctl{position:absolute;left:1199px;top:8px;display:flex;gap:8px}
.ctl2{width:10px;height:10px}
.unnamed{position:absolute;left:1167px;top:136px;width:61px;height:15px;border-radius:3px;background:#9ea3ad;color:#646870;line-height:15px;padding-left:4px;display:flex;align-items:center;justify-content:space-between;padding-right:5px;font-size:10px}
.unnamed i{border:4px solid transparent;border-top-color:#b6bac2;border-bottom-width:0}
.navbar{position:absolute;left:1221px;top:175px;width:30px;height:196px;background:#626971;border-radius:2px}
.nav-svg{width:30px;height:196px}
.cmd-hist{position:absolute;left:307px;top:401px;display:flex;flex-direction:column;gap:4px}
.cmd-hist span{width:54px;height:14px;background:#34383e;color:#80858b;line-height:14px;text-align:center;font-size:10.500px}
.cmdline{position:absolute;left:250px;top:455px;display:flex;height:23px}
.cmd-h{width:51px;background:#272e39;display:flex;align-items:center;padding-left:3px;color:#c8ccd2}
.grip{width:5px;height:17px;background:repeating-linear-gradient(#b6bbc2 0 2px,#272e39 2px 3px)}
.cmd-x{margin:0 8px 0 4px;font-size:11px}
.cmd-in{width:702px;background:#c4c4c4;display:flex;align-items:center;padding-left:4px}
.cmd-t{width:15px;height:13px}
.cr-d{border:3px solid transparent;border-top-color:#444;border-bottom-width:0;margin:0 6px 0 3px}
.cmd-ph{font-style:italic;color:#6d6d6d;word-spacing:3px}
.cr-u{border:3px solid transparent;border-bottom-color:#555;border-top-width:0;margin-left:auto;margin-right:4px}
.statusrow{height:25px;background:#1f2733;display:flex}
.ltabs{display:flex;padding-left:9px;gap:4px;height:15px}
.lt{width:55px;background:#2a3341;border-radius:0 0 6px 6px;text-align:center;line-height:13px;color:#aeb5be}
.lt-on{width:53px;background:#333e4d;font-weight:700;color:#e4e7ea}
.lt-p{width:16px;margin-left:4px;font-size:13px}
.sgroups{margin-left:auto;margin-right:5px;display:flex;gap:2.500px;height:21px;margin-top:1px}
.sg{background:#3a4658;display:flex;align-items:center;color:#dfe3e8;padding-left:1px;flex:none}
.sg-t{width:43px;justify-content:center;padding:0}
.g58{width:58px}.g95{width:95px}.g97{width:97px}.g60{width:60px}.g22{width:22px}.g28{width:28px;justify-content:center}.g41{width:41px}
.sb{width:20px;height:21px;display:flex;align-items:center;justify-content:center;flex:none}
.sb .i16{width:15px;height:15px}
.sb.on{background:#4f87bf}
.sg-11{width:14px;margin-left:2px}
.sg .cr1{margin:0 4px}
.intask{height:35px;display:flex;align-items:center;background:linear-gradient(90deg,#1b1f24,#1f1e1f 50%,#2a1c16)}
.it-logo{width:44px;display:flex;justify-content:center}
.it-search{width:315px;height:35px;background:#2b2b2b;border:1px solid #4b4b4b;border-bottom:0;display:flex;align-items:center;padding-left:10px;color:#d8d8d8;font:13.300px "Liberation Sans",sans-serif;gap:11px}
.it-search .i16{color:#d8d8d8}
.it{width:43.700px;height:35px;flex:none;display:flex;align-items:center;justify-content:center}
.it-first{margin-left:2.500px}
.it:nth-child(3),.it:nth-child(4){width:44px}
.it.it-on{background:#474747}
.it.under{box-shadow:inset 0 -2px 0 0 rgba(170,170,170,.5)}
.cortana{width:15px;height:15px;border:2.500px solid #fff;border-radius:50%}
.itw{margin-left:23px;width:20px;height:20px}
.it-temp{margin-left:9px;font:13px "Liberation Sans",sans-serif;color:#e6e6e6}
.chev{width:8px;height:8px;border-left:1.500px solid #eee;border-top:1.500px solid #eee;transform:rotate(45deg) translate(2px,2px);flex:none}
.chev-in{margin-left:16px}
.it-b{margin-left:9px}
.it-v{margin-left:5px}
.it-w{margin-left:8px}
.it-eng{margin-left:7px;font:10.500px "Liberation Sans",sans-serif;color:#dedede}
.it-clock{width:60px;margin-left:7px;display:flex;flex-direction:column;align-items:center;font:10.500px/16px "Liberation Sans",sans-serif;color:#e6e6e6}
.it-n{margin-left:13px;width:17px;height:17px}

/* windows taskbar */
.taskbar{height:40px;flex:none;display:flex;align-items:center;background:linear-gradient(90deg,#20353f,#1d3140 45%,#1b2b42);position:relative}
.tb-logo{width:48px;display:flex;justify-content:center}
.tb-search{width:288px;height:40px;background:#f3f3f3;border:1px solid #cfcfcf;border-bottom:0;display:flex;align-items:center;padding-left:10px;overflow:hidden}
.tb-search .i20{color:#1a1a1a;width:18px;height:18px}
.tb-stext{margin-left:12px;font-size:14.500px;color:#202020;white-space:nowrap}
.books{width:76px;height:40px;margin-left:auto}
.c{width:48.700px;height:40px;flex:none;display:flex;align-items:center;justify-content:center;position:relative}
.c0{width:48px}
.c1{margin-left:3px}
.cu{box-shadow:inset 0 -2px #76b9ed}
.con{background:#4a5f66}
.badge{position:absolute;left:22px;top:20px;width:14px;height:17px;border-radius:50%;background:#16130f}
.b2{background:linear-gradient(#20140f 40%,#f2e3d8 40%)}
.tray{margin-left:auto;display:flex;align-items:center;padding-right:25px;color:#f3f3f3;font-size:14.500px}
.w-t{margin-left:8px}
.w-h{margin-left:5px}
.tray .chev{margin-left:22px}
.tr1{margin-left:10px}
.tr2{margin-left:7px}
.tr3{margin-left:9px}
.tr4{margin-left:11px}
.clock{width:54px;margin-left:7px;display:flex;flex-direction:column;align-items:center;font-size:12px;line-height:19px}
.tr5{margin-left:16px;width:17px;height:17px}
```
